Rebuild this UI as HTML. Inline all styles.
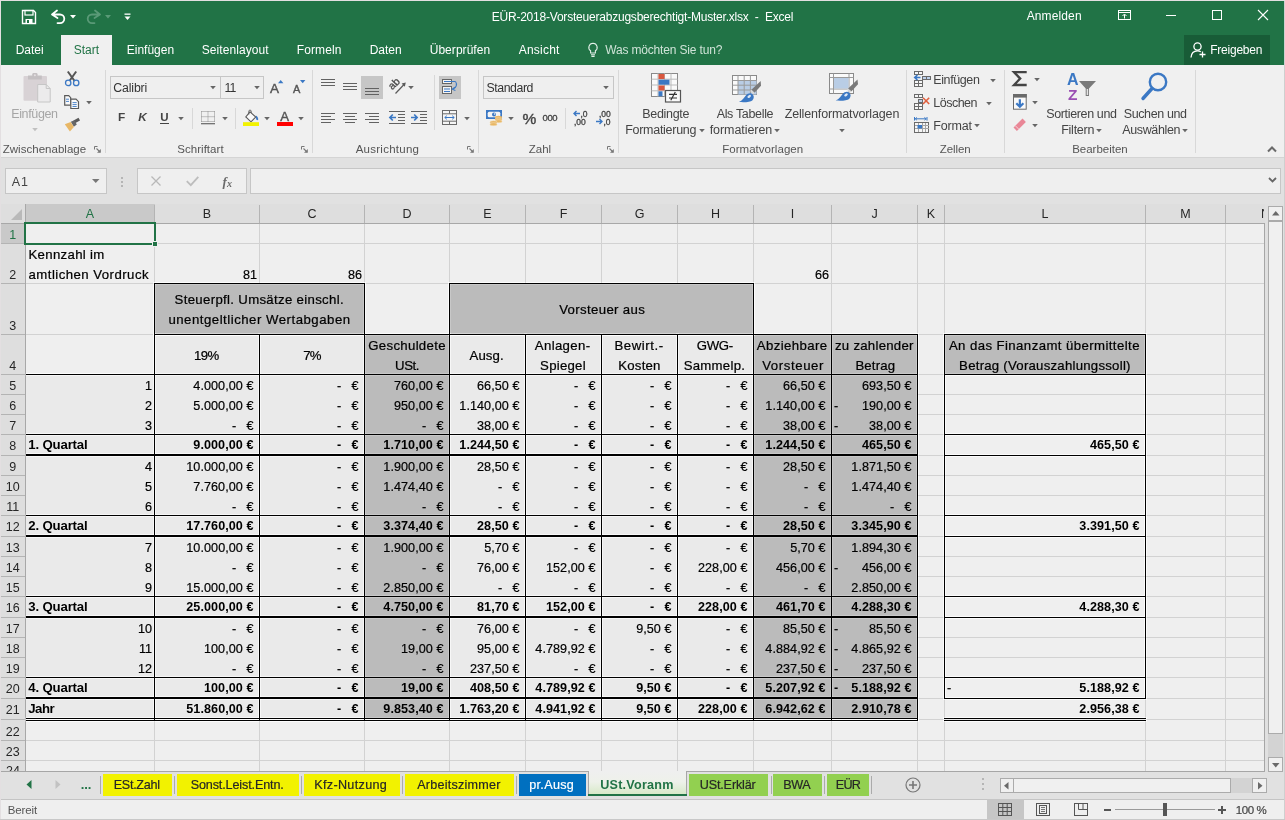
<!DOCTYPE html>
<html lang="de"><head><meta charset="utf-8"><title>Excel</title><style>
html,body{margin:0;padding:0;}
body{width:1285px;height:820px;overflow:hidden;position:relative;background:#e6e6e6;font-family:"Liberation Sans", sans-serif;}
#w{position:absolute;left:0;top:0;width:1285px;height:820px;overflow:hidden;}
#w div,#w svg,#w span{position:absolute;}
#w span{white-space:pre;}
#w svg{overflow:visible;}
#w .hl{display:none;}
@supports (mix-blend-mode:plus-lighter){#w .hl{display:block;background:rgb(13,13,13);mix-blend-mode:plus-lighter;}}
</style></head><body><div id="w">
<div style="left:0px;top:0px;width:1285px;height:820px;background:#e1e1e1;"></div>
<div style="left:0px;top:0px;width:1285px;height:65px;background:#217346;"></div>
<div style="left:0px;top:65px;width:1285px;height:92px;background:#f0f0f0;"></div>
<div style="left:0px;top:157px;width:1285px;height:1px;background:#d4d4d4;"></div>
<div style="left:0px;top:158px;width:1285px;height:46px;background:#e1e1e1;"></div>
<svg style="left:21px;top:9px;" width="16" height="16" viewBox="0 0 16 16"><path d="M1.5 1.5h11l2 2v11h-13z" fill="none" stroke="#fff" stroke-width="1.4"/><rect x="4" y="1.5" width="8" height="4.5" fill="none" stroke="#fff" stroke-width="1.2"/><rect x="4.5" y="10" width="7" height="4.5" fill="#fff"/><rect x="6" y="11" width="2" height="3" fill="#217346"/></svg>
<svg style="left:50px;top:9px;" width="18" height="16" viewBox="0 0 18 16"><path d="M2 5.5 L7 1.5 M2 5.5 L7.5 9 M2.3 5.5 H10 a4.3 4.3 0 0 1 0 8.6 H7.5" fill="none" stroke="#fff" stroke-width="1.8" stroke-linecap="round"/></svg>
<svg style="left:70px;top:15px;" width="7" height="4" viewBox="0 0 7 4"><path d="M0 0h6l-3 3.5z" fill="#fff"/></svg>
<svg style="left:83.5px;top:9px;" width="18" height="16" viewBox="0 0 18 16"><path d="M16 5.5 L11 1.5 M16 5.5 L10.5 9 M15.7 5.5 H8 a4.3 4.3 0 0 0 0 8.6 H10.5" fill="none" stroke="#5a9a77" stroke-width="1.8" stroke-linecap="round"/></svg>
<svg style="left:105px;top:15px;" width="7" height="4" viewBox="0 0 7 4"><path d="M0 0h6l-3 3.5z" fill="#5a9a77"/></svg>
<svg style="left:124px;top:13px;" width="8" height="8" viewBox="0 0 8 8"><rect x="0.5" y="0.5" width="6" height="1.3" fill="#fff"/><path d="M0.5 3.5h6l-3 3.5z" fill="#fff"/></svg>
<svg style="left:1118px;top:10px;" width="13" height="10" viewBox="0 0 13 10"><rect x="0.5" y="0.5" width="12" height="9" fill="none" stroke="#fff"/><path d="M0.5 2.5h12" stroke="#fff"/><path d="M6.5 8.5v-4M4.5 6l2-2 2 2" fill="none" stroke="#fff"/></svg>
<div style="left:1166px;top:15px;width:10px;height:1px;background:#fff;"></div>
<svg style="left:1212px;top:10px;" width="10" height="10" viewBox="0 0 10 10"><rect x="0.5" y="0.5" width="9" height="9" fill="none" stroke="#fff"/></svg>
<svg style="left:1258px;top:10px;" width="10" height="10" viewBox="0 0 10 10"><path d="M0 0l10 10M10 0l-10 10" stroke="#fff" stroke-width="1.1"/></svg>
<div style="left:61px;top:35px;width:51px;height:30px;background:#f0f0f0;"></div>
<svg style="left:587px;top:42px;" width="12" height="16" viewBox="0 0 12 16"><path d="M6 1.2a4.2 4.2 0 0 0-2.4 7.6v2.2h4.8v-2.2A4.2 4.2 0 0 0 6 1.2z" fill="none" stroke="#e4f0e9" stroke-width="1.1"/><path d="M4 12.7h4M4.4 14.4h3.2" stroke="#e4f0e9" stroke-width="1.1"/></svg>
<div style="left:1184px;top:35px;width:86px;height:30px;background:#185c37;"></div>
<svg style="left:1190px;top:41px;" width="18" height="18" viewBox="0 0 18 18"><circle cx="7.5" cy="5.5" r="3.6" fill="none" stroke="#fff" stroke-width="1.3"/><path d="M1 16.5c0.3-4 2.6-6.6 6.5-6.6 1.3 0 2.4 0.3 3.3 0.9" fill="none" stroke="#fff" stroke-width="1.3"/><path d="M12.5 10.5v6M9.5 13.5h6" stroke="#fff" stroke-width="1.3"/></svg>
<div style="left:5px;top:168px;width:102px;height:26px;background:#efefef;border:1px solid #c6c6c6;box-sizing:border-box;"></div>
<svg style="left:92px;top:179px;" width="8" height="5" viewBox="0 0 8 5"><path d="M0 0h7.5l-3.75 4z" fill="#777"/></svg>
<div style="left:121px;top:177px;width:2px;height:2px;background:#b5b5b5;"></div>
<div style="left:121px;top:181px;width:2px;height:2px;background:#b5b5b5;"></div>
<div style="left:121px;top:185px;width:2px;height:2px;background:#b5b5b5;"></div>
<div style="left:137px;top:168px;width:110px;height:26px;background:#efefef;border:1px solid #c6c6c6;box-sizing:border-box;"></div>
<svg style="left:151px;top:176px;" width="10" height="10" viewBox="0 0 10 10"><path d="M0.5 0.5l9 9M9.5 0.5l-9 9" stroke="#b8b8b8" stroke-width="1.3"/></svg>
<svg style="left:186px;top:176px;" width="13" height="10" viewBox="0 0 13 10"><path d="M0.8 5.2l4 4L12.3 0.8" fill="none" stroke="#bdbdbd" stroke-width="1.8"/></svg>
<div style="left:250px;top:168px;width:1031px;height:26px;background:#efefef;border:1px solid #c6c6c6;box-sizing:border-box;"></div>
<svg style="left:1268px;top:177px;" width="9" height="6" viewBox="0 0 9 6"><path d="M1 1l3.500 3.500 3.500-3.500" fill="none" stroke="#666" stroke-width="1.800"/></svg>
<div style="left:105px;top:70px;width:1px;height:83px;background:#d8d8d8;"></div>
<div style="left:312px;top:70px;width:1px;height:83px;background:#d8d8d8;"></div>
<div style="left:478px;top:70px;width:1px;height:83px;background:#d8d8d8;"></div>
<div style="left:618px;top:70px;width:1px;height:83px;background:#d8d8d8;"></div>
<div style="left:906px;top:70px;width:1px;height:83px;background:#d8d8d8;"></div>
<div style="left:1004px;top:70px;width:1px;height:83px;background:#d8d8d8;"></div>
<div style="left:1195px;top:70px;width:1px;height:83px;background:#d8d8d8;"></div>
<svg style="left:94px;top:146px;" width="7" height="7" viewBox="0 0 7 7"><path d="M0.500 3.500v-3h3" fill="none" stroke="#777"/><path d="M2.500 2.500l3.500 3.500" fill="none" stroke="#777" stroke-width="1.100"/><path d="M6.800 3v3.800h-3.800z" fill="#777"/></svg>
<svg style="left:301px;top:146px;" width="7" height="7" viewBox="0 0 7 7"><path d="M0.500 3.500v-3h3" fill="none" stroke="#777"/><path d="M2.500 2.500l3.500 3.500" fill="none" stroke="#777" stroke-width="1.100"/><path d="M6.800 3v3.800h-3.800z" fill="#777"/></svg>
<svg style="left:467px;top:146px;" width="7" height="7" viewBox="0 0 7 7"><path d="M0.500 3.500v-3h3" fill="none" stroke="#777"/><path d="M2.500 2.500l3.500 3.500" fill="none" stroke="#777" stroke-width="1.100"/><path d="M6.800 3v3.800h-3.800z" fill="#777"/></svg>
<svg style="left:607px;top:146px;" width="7" height="7" viewBox="0 0 7 7"><path d="M0.500 3.500v-3h3" fill="none" stroke="#777"/><path d="M2.500 2.500l3.500 3.500" fill="none" stroke="#777" stroke-width="1.100"/><path d="M6.800 3v3.800h-3.800z" fill="#777"/></svg>
<svg style="left:1267px;top:146px;" width="10" height="6" viewBox="0 0 10 6"><path d="M1 5.500l4-4 4 4" fill="none" stroke="#6a6a6a" stroke-width="2"/></svg>
<svg style="left:23px;top:72px;" width="29" height="32" viewBox="0 0 29 32"><rect x="0.500" y="4" width="23.500" height="24.700" rx="1" fill="#d8d2d5"/><rect x="5" y="3.500" width="13.800" height="4" fill="#c4c0c2"/><rect x="9.300" y="1" width="5.200" height="4" rx="1.200" fill="#c4c0c2"/><circle cx="11.900" cy="3.200" r="1" fill="#e4e0e2"/><path d="M14.700 12.500h8.500l4 4v13.500h-12.500z" fill="#ecebec" stroke="#c6c6c6" stroke-width="1"/><path d="M23.200 12.500v4h4" fill="none" stroke="#c6c6c6"/></svg>
<svg style="left:32px;top:128px;" width="6" height="4" viewBox="0 0 6 4"><path d="M0.2 0h5.6l-2.8 3.2z" fill="#c0c0c0"/></svg>
<svg style="left:64px;top:70px;" width="16" height="17" viewBox="0 0 16 17"><path d="M3.800 1.500l6.800 9.500M12.200 1.500L5.400 11" stroke="#555" stroke-width="2" fill="none"/><circle cx="4.200" cy="12.900" r="2.700" fill="none" stroke="#3b78c4" stroke-width="1.300"/><circle cx="12.200" cy="12.900" r="2.700" fill="none" stroke="#3b78c4" stroke-width="1.300"/></svg>
<svg style="left:64px;top:95px;" width="16" height="14" viewBox="0 0 16 14"><path d="M0.700 0.700h4l2 2v7.500h-6z" fill="#fafafa" stroke="#5a5a5a" stroke-width="1.200"/><path d="M2 4.200h3M2 6.400h3" stroke="#3b78c4" stroke-width="0.900"/><path d="M6.800 4.200h5.200l2.500 2.500v6.800h-7.700z" fill="#fafafa" stroke="#5a5a5a" stroke-width="1.200"/><path d="M8.500 7.600h4.200M8.500 9.600h4.200M8.500 11.500h4.200" stroke="#3b78c4" stroke-width="0.900"/></svg>
<svg style="left:86px;top:101px;" width="6" height="4" viewBox="0 0 6 4"><path d="M0.2 0h5.6l-2.8 3.2z" fill="#666666"/></svg>
<svg style="left:64px;top:117px;" width="17" height="15" viewBox="0 0 17 15"><path d="M9.500 3.500l5-2.700 1.500 2.600-5 2.900z" fill="#5a5a5a"/><path d="M6.800 4.800l3.500-1.500 2.500 4.200-3 2.300z" fill="#666"/><path d="M0.800 7.200l5.800-2.300 3.300 5.200-4 4.500z" fill="#e8b766"/></svg>
<div style="left:110px;top:76px;width:111px;height:23px;background:#efefef;border:1px solid #c6c6c6;box-sizing:border-box;"></div>
<div style="left:220px;top:76px;width:44px;height:23px;background:#efefef;border:1px solid #c6c6c6;box-sizing:border-box;"></div>
<svg style="left:210px;top:86px;" width="6" height="4" viewBox="0 0 6 4"><path d="M0.2 0h5.6l-2.8 3.2z" fill="#666666"/></svg>
<svg style="left:254px;top:86px;" width="6" height="4" viewBox="0 0 6 4"><path d="M0.2 0h5.6l-2.8 3.2z" fill="#666666"/></svg>
<svg style="left:278px;top:80px;" width="6" height="4" viewBox="0 0 6 4"><path d="M0 3.200h5.400l-2.700-3.200z" fill="#3b78c4"/></svg>
<svg style="left:300px;top:80px;" width="6" height="4" viewBox="0 0 6 4"><path d="M0 0h5.400l-2.700 3.200z" fill="#3b78c4"/></svg>
<div style="left:160px;top:123px;width:9px;height:1px;background:#444;"></div>
<svg style="left:178px;top:117px;" width="6" height="4" viewBox="0 0 6 4"><path d="M0.2 0h5.6l-2.8 3.2z" fill="#666666"/></svg>
<div style="left:192px;top:108px;width:1px;height:21px;background:#d8d8d8;"></div>
<svg style="left:201px;top:111px;" width="14" height="14" viewBox="0 0 14 14"><path d="M0.500 0.500h13M0.500 5.700h13M0.500 10.500h13M0.500 0.500v10.500M7 0.500v10.500M13.500 0.500v10.500" stroke="#8a8a8a" stroke-dasharray="1 1" fill="none"/><path d="M0 12.700h14" stroke="#666" stroke-width="1.200"/></svg>
<svg style="left:222px;top:117px;" width="6" height="4" viewBox="0 0 6 4"><path d="M0.2 0h5.6l-2.8 3.2z" fill="#666666"/></svg>
<div style="left:235px;top:108px;width:1px;height:21px;background:#d8d8d8;"></div>
<svg style="left:243px;top:109px;" width="17" height="17" viewBox="0 0 17 17"><path d="M7 2.800l5.800 5.200-4.800 4.800-5.200-4.800z" fill="#fafafa" stroke="#5a5a5a" stroke-width="1.100"/><path d="M5.800 5.500v-3.300c0-1.500 2.400-1.500 2.400 0v1.800" fill="none" stroke="#5a5a5a" stroke-width="0.900"/><path d="M12.800 6.500c1.800 1 2.800 2.600 2.300 4.500-1 0.500-2-0.200-2-1.500z" fill="#3b78c4"/><rect x="0" y="13.200" width="16" height="3.800" fill="#f2f200"/></svg>
<svg style="left:264px;top:117px;" width="6" height="4" viewBox="0 0 6 4"><path d="M0.2 0h5.6l-2.8 3.2z" fill="#666666"/></svg>
<div style="left:277px;top:122.2px;width:16px;height:3.8px;background:#ff0000;"></div>
<svg style="left:298px;top:117px;" width="6" height="4" viewBox="0 0 6 4"><path d="M0.2 0h5.6l-2.8 3.2z" fill="#666666"/></svg>
<div style="left:321px;top:79px;width:14px;height:1px;background:#626262;"></div>
<div style="left:321px;top:82px;width:14px;height:1px;background:#626262;"></div>
<div style="left:321px;top:85px;width:14px;height:1px;background:#626262;"></div>
<div style="left:343px;top:83px;width:14px;height:1px;background:#626262;"></div>
<div style="left:343px;top:86px;width:14px;height:1px;background:#626262;"></div>
<div style="left:343px;top:89px;width:14px;height:1px;background:#626262;"></div>
<div style="left:361px;top:76px;width:22px;height:23px;background:#c6c6c6;"></div>
<div style="left:365px;top:88px;width:14px;height:1px;background:#626262;"></div>
<div style="left:365px;top:91px;width:14px;height:1px;background:#626262;"></div>
<div style="left:365px;top:94px;width:14px;height:1px;background:#626262;"></div>
<svg style="left:388px;top:76px;" width="20" height="20" viewBox="0 0 20 20"><path d="M7.500 17.500L16.500 8" stroke="#5a5a5a" stroke-width="1.200"/><path d="M17.800 6.600l-4.200 1 3.200 3.200z" fill="#5a5a5a"/><text x="0" y="0" transform="translate(4.300 14.300) rotate(-45)" font-family="Liberation Sans, sans-serif" font-size="10.500" fill="#4a4a4a" stroke="#4a4a4a" stroke-width="0.300">ab</text></svg>
<svg style="left:408px;top:86px;" width="6" height="4" viewBox="0 0 6 4"><path d="M0.2 0h5.6l-2.8 3.2z" fill="#666666"/></svg>
<div style="left:434px;top:75px;width:1px;height:55px;background:#d8d8d8;"></div>
<div style="left:439px;top:76px;width:22px;height:23px;background:#c6c6c6;"></div>
<svg style="left:442px;top:79px;" width="16" height="16" viewBox="0 0 16 16"><rect x="0.500" y="0.500" width="9" height="4" fill="#f4f4f4" stroke="#666"/><rect x="0.500" y="7.500" width="9" height="7" fill="#f4f4f4" stroke="#666"/><path d="M2 2.500h11.500M2 10h6M2 12.500h6" stroke="#3b78c4" stroke-width="1"/><path d="M13.500 2.500c1.800 2.500 1 6.500-2.500 7.500" fill="none" stroke="#3b78c4" stroke-width="1.100"/><path d="M13 8.200l-2.800 2 3.200 1.300" fill="none" stroke="#3b78c4" stroke-width="1.100"/></svg>
<div style="left:321px;top:113px;width:14px;height:1px;background:#626262;"></div>
<div style="left:321px;top:116px;width:10px;height:1px;background:#626262;"></div>
<div style="left:321px;top:119px;width:14px;height:1px;background:#626262;"></div>
<div style="left:321px;top:122px;width:10px;height:1px;background:#626262;"></div>
<div style="left:343px;top:113px;width:14px;height:1px;background:#626262;"></div>
<div style="left:345px;top:116px;width:10px;height:1px;background:#626262;"></div>
<div style="left:343px;top:119px;width:14px;height:1px;background:#626262;"></div>
<div style="left:345px;top:122px;width:10px;height:1px;background:#626262;"></div>
<div style="left:365px;top:113px;width:14px;height:1px;background:#626262;"></div>
<div style="left:369px;top:116px;width:10px;height:1px;background:#626262;"></div>
<div style="left:365px;top:119px;width:14px;height:1px;background:#626262;"></div>
<div style="left:369px;top:122px;width:10px;height:1px;background:#626262;"></div>
<div style="left:389px;top:111px;width:16px;height:1px;background:#626262;"></div>
<div style="left:398px;top:114px;width:7px;height:1px;background:#626262;"></div>
<div style="left:398px;top:117px;width:7px;height:1px;background:#626262;"></div>
<div style="left:398px;top:120px;width:7px;height:1px;background:#626262;"></div>
<div style="left:389px;top:123px;width:16px;height:1px;background:#626262;"></div>
<svg style="left:389px;top:113px;" width="8" height="9" viewBox="0 0 8 9"><path d="M7 4.500H1.200M3.800 1.500L0.900 4.500l2.900 3" fill="none" stroke="#3b78c4" stroke-width="1.700"/></svg>
<div style="left:411px;top:111px;width:16px;height:1px;background:#626262;"></div>
<div style="left:420px;top:114px;width:7px;height:1px;background:#626262;"></div>
<div style="left:420px;top:117px;width:7px;height:1px;background:#626262;"></div>
<div style="left:420px;top:120px;width:7px;height:1px;background:#626262;"></div>
<div style="left:411px;top:123px;width:16px;height:1px;background:#626262;"></div>
<svg style="left:411px;top:113px;" width="8" height="9" viewBox="0 0 8 9"><path d="M0 4.500h5.800M3.200 1.500L6.100 4.500l-2.900 3" fill="none" stroke="#3b78c4" stroke-width="1.700"/></svg>
<svg style="left:442px;top:110px;" width="16" height="16" viewBox="0 0 16 16"><rect x="0.500" y="0.500" width="14" height="14" fill="#f6f6f6" stroke="#6a6a6a"/><path d="M0.500 3.800h14M0.500 11.200h14M7.500 0.500v3.300M7.500 11.200v3.300" stroke="#6a6a6a"/><path d="M2.800 7.500h9.400M4.800 5.700L2.800 7.500l2 1.800M10.200 5.700l2 1.800-2 1.800" fill="none" stroke="#3b78c4" stroke-width="1"/></svg>
<svg style="left:464px;top:117px;" width="6" height="4" viewBox="0 0 6 4"><path d="M0.2 0h5.6l-2.8 3.2z" fill="#666666"/></svg>
<div style="left:483px;top:76px;width:131px;height:23px;background:#efefef;border:1px solid #c6c6c6;box-sizing:border-box;"></div>
<svg style="left:603px;top:86px;" width="6" height="4" viewBox="0 0 6 4"><path d="M0.2 0h5.6l-2.8 3.2z" fill="#666666"/></svg>
<svg style="left:486px;top:109px;" width="17" height="17" viewBox="0 0 17 17"><rect x="0" y="1" width="16" height="9" fill="#3b78c4"/><rect x="1.700" y="2.700" width="12.600" height="5.600" rx="1.500" fill="#f4f4f4"/><circle cx="8" cy="5.500" r="2" fill="#3b78c4"/><circle cx="8.600" cy="5" r="0.800" fill="#f4f4f4"/><ellipse cx="12.500" cy="8.300" rx="3.600" ry="1.500" fill="#e8b766"/><ellipse cx="12.500" cy="10.300" rx="3.600" ry="1.500" fill="#e8b766" stroke="#f4e3c0" stroke-width="0.500"/><ellipse cx="12.500" cy="12.200" rx="3.600" ry="1.500" fill="#e8b766" stroke="#f4e3c0" stroke-width="0.500"/><ellipse cx="7.500" cy="13.200" rx="3.600" ry="1.500" fill="#e8b766" stroke="#f4e3c0" stroke-width="0.500"/><ellipse cx="7.500" cy="15.200" rx="3.600" ry="1.500" fill="#e8b766" stroke="#f4e3c0" stroke-width="0.500"/></svg>
<svg style="left:508px;top:117px;" width="6" height="4" viewBox="0 0 6 4"><path d="M0.2 0h5.6l-2.8 3.2z" fill="#666666"/></svg>
<div style="left:565px;top:108px;width:1px;height:21px;background:#d8d8d8;"></div>
<svg style="left:573px;top:110px;" width="16" height="16" viewBox="0 0 16 16"><path d="M1 3.5h6M3.5 1L1 3.5 3.5 6" fill="none" stroke="#3b78c4" stroke-width="1.4"/></svg>
<svg style="left:595px;top:110px;" width="16" height="16" viewBox="0 0 16 16"><path d="M1 11.5h6M4.5 9L7 11.5 4.5 14" fill="none" stroke="#3b78c4" stroke-width="1.4"/></svg>
<svg style="left:651px;top:73px;" width="31" height="30" viewBox="0 0 31 30"><rect x="0.5" y="0.5" width="26" height="23" fill="#fafafa" stroke="#8a8a8a"/><path d="M0.5 6.2h26M0.5 12h26M0.5 17.8h26M7 0.5v23M13.5 0.5v23M20 0.5v23" stroke="#bcbcbc"/><rect x="7.5" y="1" width="6" height="5" fill="#d9573f"/><rect x="7.5" y="6.7" width="11" height="5" fill="#3b78c4"/><rect x="7.5" y="12.5" width="6" height="5" fill="#d9573f"/><rect x="7.5" y="18.3" width="4" height="5" fill="#3b78c4"/><rect x="14.5" y="17.5" width="15" height="11.5" fill="#fafafa" stroke="#555" stroke-width="1.2"/><path d="M18 21.3h8M18 25h8M24.3 19l-4.5 8.3" stroke="#333" stroke-width="1.2"/></svg>
<svg style="left:699px;top:129px;" width="6" height="4" viewBox="0 0 6 4"><path d="M0.2 0h5.6l-2.8 3.2z" fill="#666666"/></svg>
<svg style="left:732px;top:75px;" width="30" height="28" viewBox="0 0 30 28"><rect x="0.5" y="0.5" width="24" height="19" fill="#fafafa" stroke="#8a8a8a"/><rect x="6" y="5.5" width="18.5" height="14" fill="#b9cde5"/><path d="M0.5 5.5h24M0.5 10.2h24M0.5 15h24M6 0.5v19M12.2 0.5v19M18.4 0.5v19" stroke="#9a9a9a"/><path d="M28.700 6.100l0.300 4.700-6.500 7-3.100-3.100z" fill="#7a7a7a"/><path d="M19.400 14.700l3.100 3.100-1.300 1.400-3.100-3.100z" fill="#d8d8d8"/><path d="M6.900 27.100C10.500 25.500 12 22.500 13.800 20.500C15.500 18.500 18.500 17.600 20.300 19C22.300 20.600 22.300 23.500 20.300 25.500C18.500 27.200 13 27.400 6.900 27.100Z" fill="#3b78c4"/><ellipse cx="17.200" cy="21.400" rx="2" ry="1.200" transform="rotate(-35 17.200 21.400)" fill="#dfe8f4"/></svg>
<svg style="left:774px;top:129px;" width="6" height="4" viewBox="0 0 6 4"><path d="M0.2 0h5.6l-2.8 3.2z" fill="#666666"/></svg>
<svg style="left:829px;top:73px;" width="30" height="30" viewBox="0 0 30 30"><rect x="0.5" y="0.5" width="24" height="20" fill="#fafafa" stroke="#8a8a8a"/><path d="M0.5 4.5h24M0.5 16h24M4.500 0.500v20M20 0.500v20" stroke="#9a9a9a"/><rect x="5" y="5" width="14.500" height="10.500" fill="#b9cde5"/><path d="M28.500 6.600l0.500 4.600-6.700 7.200-3.200-3z" fill="#7a7a7a"/><path d="M19.100 15.400l3.200 3-1.300 1.400-3.200-3z" fill="#d8d8d8"/><path d="M6.700 27.600C10.300 26 11.800 23 13.600 21C15.300 19 18.300 18.100 20.100 19.500C22.100 21.100 22.100 24 20.100 26C18.300 27.700 12.800 27.900 6.700 27.600Z" fill="#3b78c4"/><ellipse cx="17" cy="21.900" rx="2" ry="1.200" transform="rotate(-35 17 21.900)" fill="#dfe8f4"/></svg>
<svg style="left:839px;top:129px;" width="6" height="4" viewBox="0 0 6 4"><path d="M0.2 0h5.6l-2.8 3.2z" fill="#666666"/></svg>
<svg style="left:914px;top:71px;" width="17" height="16" viewBox="0 0 17 16"><rect x="0.5" y="0.5" width="4" height="3" fill="#f6f6f6" stroke="#6a6a6a" shape-rendering="crispEdges"/><rect x="4.5" y="0.5" width="4" height="3" fill="#f6f6f6" stroke="#6a6a6a" shape-rendering="crispEdges"/><rect x="8" y="5" width="4" height="3" fill="#bcd0ea" stroke="#6a6a6a" shape-rendering="crispEdges"/><rect x="12" y="5" width="4" height="3" fill="#bcd0ea" stroke="#6a6a6a" shape-rendering="crispEdges"/><rect x="0.5" y="9.5" width="4" height="3" fill="#f6f6f6" stroke="#6a6a6a" shape-rendering="crispEdges"/><rect x="4.5" y="9.5" width="4" height="3" fill="#f6f6f6" stroke="#6a6a6a" shape-rendering="crispEdges"/><rect x="0.5" y="12.5" width="4" height="3" fill="#f6f6f6" stroke="#6a6a6a" shape-rendering="crispEdges"/><rect x="4.5" y="12.5" width="4" height="3" fill="#f6f6f6" stroke="#6a6a6a" shape-rendering="crispEdges"/><path d="M6.500 6.500H1M3.400 4L0.800 6.500l2.600 2.500" fill="none" stroke="#3b78c4" stroke-width="1.700"/></svg>
<svg style="left:990px;top:79px;" width="6" height="4" viewBox="0 0 6 4"><path d="M0.2 0h5.6l-2.8 3.2z" fill="#666666"/></svg>
<svg style="left:914px;top:94px;" width="17" height="16" viewBox="0 0 17 16"><rect x="0.5" y="0.5" width="4" height="3" fill="#f6f6f6" stroke="#6a6a6a" shape-rendering="crispEdges"/><rect x="4.5" y="0.5" width="4" height="3" fill="#f6f6f6" stroke="#6a6a6a" shape-rendering="crispEdges"/><rect x="4" y="5" width="4" height="3" fill="#bcd0ea" stroke="#6a6a6a" shape-rendering="crispEdges"/><rect x="0.5" y="9.5" width="4" height="3" fill="#f6f6f6" stroke="#6a6a6a" shape-rendering="crispEdges"/><rect x="4.5" y="9.5" width="4" height="3" fill="#f6f6f6" stroke="#6a6a6a" shape-rendering="crispEdges"/><rect x="0.5" y="12.5" width="4" height="3" fill="#f6f6f6" stroke="#6a6a6a" shape-rendering="crispEdges"/><rect x="4.5" y="12.5" width="4" height="3" fill="#f6f6f6" stroke="#6a6a6a" shape-rendering="crispEdges"/><path d="M9 3.800l6.200 6.200M15.200 3.800l-6.200 6.200" stroke="#e0603f" stroke-width="1.600"/></svg>
<svg style="left:986px;top:102px;" width="6" height="4" viewBox="0 0 6 4"><path d="M0.2 0h5.6l-2.8 3.2z" fill="#666666"/></svg>
<svg style="left:914px;top:117px;" width="16" height="16" viewBox="0 0 16 16"><path d="M1.200 1.800h11M0.500 0v3.600M13 0v3.600" stroke="#3b78c4" stroke-width="1" fill="none"/><path d="M3 0.400L1.200 1.800 3 3.200M10.400 0.400l1.800 1.400-1.800 1.400" stroke="#3b78c4" stroke-width="0.900" fill="none"/><rect x="0.5" y="5.5" width="14" height="9.5" fill="#f6f6f6" stroke="#6a6a6a" shape-rendering="crispEdges"/><path d="M0.500 8.500h14M0.500 11.500h14M4 5.500v9.500M8 5.500v9.500M11.500 5.500v9.500" stroke="#a4a4a4" shape-rendering="crispEdges"/><rect x="3.500" y="8" width="4.500" height="3.500" fill="#3b78c4"/></svg>
<svg style="left:974px;top:124px;" width="6" height="4" viewBox="0 0 6 4"><path d="M0.2 0h5.6l-2.8 3.2z" fill="#666666"/></svg>
<svg style="left:1012px;top:71px;" width="16" height="16" viewBox="0 0 16 16"><path d="M14.700 1.200H2l6.200 6.400-6.200 6.400H14.700" fill="none" stroke="#444" stroke-width="2.300" stroke-linejoin="miter"/></svg>
<svg style="left:1034px;top:78px;" width="6" height="4" viewBox="0 0 6 4"><path d="M0.2 0h5.6l-2.8 3.2z" fill="#666666"/></svg>
<svg style="left:1013px;top:94px;" width="14" height="16" viewBox="0 0 14 16"><rect x="0.500" y="0.500" width="12.700" height="14.700" fill="#fafafa" stroke="#6a6a6a"/><rect x="0" y="0" width="13.700" height="3.600" fill="#6a6a6a"/><path d="M6.850 5.200v7.500M3.300 9.200l3.550 3.500 3.550-3.500" fill="none" stroke="#3b78c4" stroke-width="2.200"/></svg>
<svg style="left:1032px;top:101px;" width="6" height="4" viewBox="0 0 6 4"><path d="M0.2 0h5.6l-2.8 3.2z" fill="#666666"/></svg>
<svg style="left:1013px;top:118px;" width="14" height="14" viewBox="0 0 14 14"><path d="M9.500 0.500l3.400 3.400-9 9-3.400-3.400z" fill="#e98797"/><path d="M2.300 7.700l3.400 3.400" stroke="#f6d3d8" stroke-width="1"/></svg>
<svg style="left:1032px;top:124px;" width="6" height="4" viewBox="0 0 6 4"><path d="M0.2 0h5.6l-2.8 3.2z" fill="#666666"/></svg>
<svg style="left:1079px;top:81px;" width="18" height="16" viewBox="0 0 18 16"><path d="M0 0h17l-7 7.500v7.500h-3.300v-7.500z" fill="#7a7a7a"/><rect x="7.700" y="8" width="1.400" height="6" fill="#e4e4e4"/></svg>
<svg style="left:1096px;top:129px;" width="6" height="4" viewBox="0 0 6 4"><path d="M0.2 0h5.6l-2.8 3.2z" fill="#666666"/></svg>
<svg style="left:1141px;top:72px;" width="28" height="29" viewBox="0 0 28 29"><circle cx="17" cy="10" r="8.200" fill="none" stroke="#3b78c4" stroke-width="2.400"/><path d="M11 16.500l-9 10" stroke="#3b78c4" stroke-width="3.400" stroke-linecap="round"/></svg>
<svg style="left:1182px;top:129px;" width="6" height="4" viewBox="0 0 6 4"><path d="M0.2 0h5.6l-2.8 3.2z" fill="#666666"/></svg>
<div style="left:26px;top:224px;width:1239px;height:547px;background:#efefef;"></div>
<div style="left:1px;top:204px;width:1264px;height:19px;background:#dedede;"></div>
<div style="left:1px;top:224px;width:24px;height:547px;background:#dedede;"></div>
<div style="left:25px;top:204px;width:130px;height:19px;background:#c9c9c9;"></div>
<div style="left:1px;top:224px;width:24px;height:19px;background:#c9c9c9;"></div>
<div style="left:26px;top:375px;width:891px;height:344px;background:#eaeaea;"></div>
<div style="left:155px;top:335px;width:762px;height:40px;background:#eaeaea;"></div>
<div style="left:155px;top:284px;width:209px;height:50px;background:#bbbbbb;"></div>
<div style="left:450px;top:284px;width:303px;height:50px;background:#bbbbbb;"></div>
<div style="left:365px;top:335px;width:84px;height:384px;background:#bbbbbb;"></div>
<div style="left:754px;top:335px;width:163px;height:384px;background:#bbbbbb;"></div>
<div style="left:945px;top:335px;width:200px;height:39px;background:#bbbbbb;"></div>
<div style="left:154px;top:224px;width:1px;height:60px;background:#d2d2d2;"></div>
<div style="left:154px;top:720px;width:1px;height:51px;background:#d2d2d2;"></div>
<div style="left:259px;top:224px;width:1px;height:60px;background:#d2d2d2;"></div>
<div style="left:259px;top:720px;width:1px;height:51px;background:#d2d2d2;"></div>
<div style="left:364px;top:224px;width:1px;height:60px;background:#d2d2d2;"></div>
<div style="left:364px;top:720px;width:1px;height:51px;background:#d2d2d2;"></div>
<div style="left:449px;top:224px;width:1px;height:60px;background:#d2d2d2;"></div>
<div style="left:449px;top:720px;width:1px;height:51px;background:#d2d2d2;"></div>
<div style="left:525px;top:224px;width:1px;height:60px;background:#d2d2d2;"></div>
<div style="left:525px;top:720px;width:1px;height:51px;background:#d2d2d2;"></div>
<div style="left:601px;top:224px;width:1px;height:60px;background:#d2d2d2;"></div>
<div style="left:601px;top:720px;width:1px;height:51px;background:#d2d2d2;"></div>
<div style="left:677px;top:224px;width:1px;height:60px;background:#d2d2d2;"></div>
<div style="left:677px;top:720px;width:1px;height:51px;background:#d2d2d2;"></div>
<div style="left:753px;top:224px;width:1px;height:60px;background:#d2d2d2;"></div>
<div style="left:753px;top:720px;width:1px;height:51px;background:#d2d2d2;"></div>
<div style="left:831px;top:224px;width:1px;height:60px;background:#d2d2d2;"></div>
<div style="left:831px;top:720px;width:1px;height:51px;background:#d2d2d2;"></div>
<div style="left:917px;top:224px;width:1px;height:60px;background:#d2d2d2;"></div>
<div style="left:917px;top:720px;width:1px;height:51px;background:#d2d2d2;"></div>
<div style="left:944px;top:224px;width:1px;height:547px;background:#d2d2d2;"></div>
<div style="left:1145px;top:224px;width:1px;height:547px;background:#d2d2d2;"></div>
<div style="left:1225px;top:224px;width:1px;height:547px;background:#d2d2d2;"></div>
<div style="left:154px;top:284px;width:1px;height:91px;background:#d2d2d2;"></div>
<div style="left:364px;top:284px;width:1px;height:51px;background:#d2d2d2;"></div>
<div style="left:449px;top:284px;width:1px;height:51px;background:#d2d2d2;"></div>
<div style="left:753px;top:284px;width:1px;height:51px;background:#d2d2d2;"></div>
<div style="left:831px;top:284px;width:1px;height:51px;background:#d2d2d2;"></div>
<div style="left:917px;top:284px;width:1px;height:436px;background:#d2d2d2;"></div>
<div style="left:26px;top:243px;width:1239px;height:1px;background:#d2d2d2;"></div>
<div style="left:26px;top:283px;width:1239px;height:1px;background:#d2d2d2;"></div>
<div style="left:26px;top:334px;width:129px;height:1px;background:#d2d2d2;"></div>
<div style="left:365px;top:334px;width:84px;height:1px;background:#d2d2d2;"></div>
<div style="left:754px;top:334px;width:511px;height:1px;background:#d2d2d2;"></div>
<div style="left:26px;top:374px;width:129px;height:1px;background:#d2d2d2;"></div>
<div style="left:918px;top:374px;width:347px;height:1px;background:#d2d2d2;"></div>
<div style="left:918px;top:394px;width:347px;height:1px;background:#d2d2d2;"></div>
<div style="left:918px;top:414px;width:347px;height:1px;background:#d2d2d2;"></div>
<div style="left:918px;top:434px;width:347px;height:1px;background:#d2d2d2;"></div>
<div style="left:918px;top:455px;width:347px;height:1px;background:#d2d2d2;"></div>
<div style="left:918px;top:475px;width:347px;height:1px;background:#d2d2d2;"></div>
<div style="left:918px;top:495px;width:347px;height:1px;background:#d2d2d2;"></div>
<div style="left:918px;top:515px;width:347px;height:1px;background:#d2d2d2;"></div>
<div style="left:918px;top:536px;width:347px;height:1px;background:#d2d2d2;"></div>
<div style="left:918px;top:556px;width:347px;height:1px;background:#d2d2d2;"></div>
<div style="left:918px;top:576px;width:347px;height:1px;background:#d2d2d2;"></div>
<div style="left:918px;top:596px;width:347px;height:1px;background:#d2d2d2;"></div>
<div style="left:918px;top:617px;width:347px;height:1px;background:#d2d2d2;"></div>
<div style="left:918px;top:637px;width:347px;height:1px;background:#d2d2d2;"></div>
<div style="left:918px;top:657px;width:347px;height:1px;background:#d2d2d2;"></div>
<div style="left:918px;top:677px;width:347px;height:1px;background:#d2d2d2;"></div>
<div style="left:918px;top:698px;width:347px;height:1px;background:#d2d2d2;"></div>
<div style="left:918px;top:719px;width:347px;height:1px;background:#d2d2d2;"></div>
<div style="left:26px;top:740px;width:1239px;height:1px;background:#d2d2d2;"></div>
<div style="left:26px;top:760px;width:1239px;height:1px;background:#d2d2d2;"></div>
<div style="left:1px;top:223px;width:1264px;height:1px;background:#a8a8a8;"></div>
<div style="left:25px;top:204px;width:1px;height:567px;background:#a8a8a8;"></div>
<div style="left:154px;top:205px;width:1px;height:18px;background:#b4b4b4;"></div>
<div style="left:259px;top:205px;width:1px;height:18px;background:#b4b4b4;"></div>
<div style="left:364px;top:205px;width:1px;height:18px;background:#b4b4b4;"></div>
<div style="left:449px;top:205px;width:1px;height:18px;background:#b4b4b4;"></div>
<div style="left:525px;top:205px;width:1px;height:18px;background:#b4b4b4;"></div>
<div style="left:601px;top:205px;width:1px;height:18px;background:#b4b4b4;"></div>
<div style="left:677px;top:205px;width:1px;height:18px;background:#b4b4b4;"></div>
<div style="left:753px;top:205px;width:1px;height:18px;background:#b4b4b4;"></div>
<div style="left:831px;top:205px;width:1px;height:18px;background:#b4b4b4;"></div>
<div style="left:917px;top:205px;width:1px;height:18px;background:#b4b4b4;"></div>
<div style="left:944px;top:205px;width:1px;height:18px;background:#b4b4b4;"></div>
<div style="left:1145px;top:205px;width:1px;height:18px;background:#b4b4b4;"></div>
<div style="left:1225px;top:205px;width:1px;height:18px;background:#b4b4b4;"></div>
<div style="left:1px;top:243px;width:24px;height:1px;background:#b4b4b4;"></div>
<div style="left:1px;top:283px;width:24px;height:1px;background:#b4b4b4;"></div>
<div style="left:1px;top:334px;width:24px;height:1px;background:#b4b4b4;"></div>
<div style="left:1px;top:374px;width:24px;height:1px;background:#b4b4b4;"></div>
<div style="left:1px;top:394px;width:24px;height:1px;background:#b4b4b4;"></div>
<div style="left:1px;top:414px;width:24px;height:1px;background:#b4b4b4;"></div>
<div style="left:1px;top:434px;width:24px;height:1px;background:#b4b4b4;"></div>
<div style="left:1px;top:455px;width:24px;height:1px;background:#b4b4b4;"></div>
<div style="left:1px;top:475px;width:24px;height:1px;background:#b4b4b4;"></div>
<div style="left:1px;top:495px;width:24px;height:1px;background:#b4b4b4;"></div>
<div style="left:1px;top:515px;width:24px;height:1px;background:#b4b4b4;"></div>
<div style="left:1px;top:536px;width:24px;height:1px;background:#b4b4b4;"></div>
<div style="left:1px;top:556px;width:24px;height:1px;background:#b4b4b4;"></div>
<div style="left:1px;top:576px;width:24px;height:1px;background:#b4b4b4;"></div>
<div style="left:1px;top:596px;width:24px;height:1px;background:#b4b4b4;"></div>
<div style="left:1px;top:617px;width:24px;height:1px;background:#b4b4b4;"></div>
<div style="left:1px;top:637px;width:24px;height:1px;background:#b4b4b4;"></div>
<div style="left:1px;top:657px;width:24px;height:1px;background:#b4b4b4;"></div>
<div style="left:1px;top:677px;width:24px;height:1px;background:#b4b4b4;"></div>
<div style="left:1px;top:698px;width:24px;height:1px;background:#b4b4b4;"></div>
<div style="left:1px;top:719px;width:24px;height:1px;background:#b4b4b4;"></div>
<div style="left:1px;top:740px;width:24px;height:1px;background:#b4b4b4;"></div>
<div style="left:1px;top:760px;width:24px;height:1px;background:#b4b4b4;"></div>
<svg style="left:10px;top:208px;" width="13" height="13" viewBox="0 0 13 13"><path d="M12 1v11H1z" fill="#b9b9b9"/></svg>
<div style="left:1226px;top:204px;width:38px;height:19px;overflow:hidden;"><span style="position:absolute;left:35px;top:4px;font-size:12.5px;line-height:12.5px;color:#262626;">N</span></div>
<div style="left:1px;top:761px;width:24px;height:10px;overflow:hidden;"><span style="position:absolute;left:5px;top:4px;font-size:12.5px;line-height:12.5px;color:#262626;">24</span></div>
<div class="hl" style="left:153px;top:282px;width:213px;height:3px;"></div>
<div class="hl" style="left:153px;top:333px;width:213px;height:3px;"></div>
<div class="hl" style="left:153px;top:282px;width:3px;height:54px;"></div>
<div class="hl" style="left:363px;top:282px;width:3px;height:54px;"></div>
<div class="hl" style="left:448px;top:282px;width:307px;height:3px;"></div>
<div class="hl" style="left:448px;top:333px;width:307px;height:3px;"></div>
<div class="hl" style="left:448px;top:282px;width:3px;height:54px;"></div>
<div class="hl" style="left:752px;top:282px;width:3px;height:54px;"></div>
<div class="hl" style="left:153px;top:333px;width:3px;height:388px;"></div>
<div class="hl" style="left:258px;top:333px;width:3px;height:388px;"></div>
<div class="hl" style="left:363px;top:333px;width:3px;height:388px;"></div>
<div class="hl" style="left:448px;top:333px;width:3px;height:388px;"></div>
<div class="hl" style="left:524px;top:333px;width:3px;height:388px;"></div>
<div class="hl" style="left:600px;top:333px;width:3px;height:388px;"></div>
<div class="hl" style="left:676px;top:333px;width:3px;height:388px;"></div>
<div class="hl" style="left:752px;top:333px;width:3px;height:388px;"></div>
<div class="hl" style="left:830px;top:333px;width:3px;height:388px;"></div>
<div class="hl" style="left:916px;top:333px;width:3px;height:388px;"></div>
<div class="hl" style="left:153px;top:333px;width:766px;height:3px;"></div>
<div class="hl" style="left:25px;top:373px;width:894px;height:3px;"></div>
<div class="hl" style="left:25px;top:433px;width:894px;height:3px;"></div>
<div class="hl" style="left:25px;top:514px;width:894px;height:3px;"></div>
<div class="hl" style="left:25px;top:595px;width:894px;height:3px;"></div>
<div class="hl" style="left:25px;top:676px;width:894px;height:3px;"></div>
<div class="hl" style="left:25px;top:453px;width:894px;height:4px;"></div>
<div class="hl" style="left:25px;top:534px;width:894px;height:4px;"></div>
<div class="hl" style="left:25px;top:615px;width:894px;height:4px;"></div>
<div class="hl" style="left:25px;top:696px;width:894px;height:4px;"></div>
<div class="hl" style="left:25px;top:717px;width:894px;height:3px;"></div>
<div class="hl" style="left:25px;top:719px;width:894px;height:3px;"></div>
<div class="hl" style="left:943px;top:333px;width:204px;height:3px;"></div>
<div class="hl" style="left:943px;top:373px;width:204px;height:3px;"></div>
<div class="hl" style="left:943px;top:333px;width:3px;height:367px;"></div>
<div class="hl" style="left:1144px;top:333px;width:3px;height:367px;"></div>
<div class="hl" style="left:943px;top:433px;width:204px;height:3px;"></div>
<div class="hl" style="left:943px;top:454px;width:204px;height:3px;"></div>
<div class="hl" style="left:943px;top:514px;width:204px;height:3px;"></div>
<div class="hl" style="left:943px;top:535px;width:204px;height:3px;"></div>
<div class="hl" style="left:943px;top:595px;width:204px;height:3px;"></div>
<div class="hl" style="left:943px;top:616px;width:204px;height:3px;"></div>
<div class="hl" style="left:943px;top:676px;width:204px;height:3px;"></div>
<div class="hl" style="left:943px;top:697px;width:204px;height:3px;"></div>
<div class="hl" style="left:943px;top:717px;width:204px;height:3px;"></div>
<div class="hl" style="left:943px;top:719px;width:204px;height:3px;"></div>
<div style="left:154px;top:283px;width:211px;height:1px;background:#000000;"></div>
<div style="left:154px;top:334px;width:211px;height:1px;background:#000000;"></div>
<div style="left:154px;top:283px;width:1px;height:52px;background:#000000;"></div>
<div style="left:364px;top:283px;width:1px;height:52px;background:#000000;"></div>
<div style="left:449px;top:283px;width:305px;height:1px;background:#000000;"></div>
<div style="left:449px;top:334px;width:305px;height:1px;background:#000000;"></div>
<div style="left:449px;top:283px;width:1px;height:52px;background:#000000;"></div>
<div style="left:753px;top:283px;width:1px;height:52px;background:#000000;"></div>
<div style="left:154px;top:334px;width:1px;height:386px;background:#000000;"></div>
<div style="left:259px;top:334px;width:1px;height:386px;background:#000000;"></div>
<div style="left:364px;top:334px;width:1px;height:386px;background:#000000;"></div>
<div style="left:449px;top:334px;width:1px;height:386px;background:#000000;"></div>
<div style="left:525px;top:334px;width:1px;height:386px;background:#000000;"></div>
<div style="left:601px;top:334px;width:1px;height:386px;background:#000000;"></div>
<div style="left:677px;top:334px;width:1px;height:386px;background:#000000;"></div>
<div style="left:753px;top:334px;width:1px;height:386px;background:#000000;"></div>
<div style="left:831px;top:334px;width:1px;height:386px;background:#000000;"></div>
<div style="left:917px;top:334px;width:1px;height:386px;background:#000000;"></div>
<div style="left:154px;top:334px;width:764px;height:1px;background:#000000;"></div>
<div style="left:26px;top:374px;width:892px;height:1px;background:#000000;"></div>
<div style="left:26px;top:434px;width:892px;height:1px;background:#000000;"></div>
<div style="left:26px;top:515px;width:892px;height:1px;background:#000000;"></div>
<div style="left:26px;top:596px;width:892px;height:1px;background:#000000;"></div>
<div style="left:26px;top:677px;width:892px;height:1px;background:#000000;"></div>
<div style="left:26px;top:454px;width:892px;height:2px;background:#000000;"></div>
<div style="left:26px;top:535px;width:892px;height:2px;background:#000000;"></div>
<div style="left:26px;top:616px;width:892px;height:2px;background:#000000;"></div>
<div style="left:26px;top:697px;width:892px;height:2px;background:#000000;"></div>
<div style="left:26px;top:718px;width:892px;height:1px;background:#000000;"></div>
<div style="left:26px;top:720px;width:892px;height:1px;background:#000000;"></div>
<div style="left:944px;top:334px;width:202px;height:1px;background:#000000;"></div>
<div style="left:944px;top:374px;width:202px;height:1px;background:#000000;"></div>
<div style="left:944px;top:334px;width:1px;height:365px;background:#000000;"></div>
<div style="left:1145px;top:334px;width:1px;height:365px;background:#000000;"></div>
<div style="left:944px;top:434px;width:202px;height:1px;background:#000000;"></div>
<div style="left:944px;top:455px;width:202px;height:1px;background:#000000;"></div>
<div style="left:944px;top:515px;width:202px;height:1px;background:#000000;"></div>
<div style="left:944px;top:536px;width:202px;height:1px;background:#000000;"></div>
<div style="left:944px;top:596px;width:202px;height:1px;background:#000000;"></div>
<div style="left:944px;top:617px;width:202px;height:1px;background:#000000;"></div>
<div style="left:944px;top:677px;width:202px;height:1px;background:#000000;"></div>
<div style="left:944px;top:698px;width:202px;height:1px;background:#000000;"></div>
<div style="left:944px;top:718px;width:202px;height:1px;background:#000000;"></div>
<div style="left:944px;top:720px;width:202px;height:1px;background:#000000;"></div>
<div style="left:24px;top:222px;width:132px;height:23px;border:2px solid #217346;box-sizing:border-box;"></div>
<div style="left:152px;top:241px;width:6px;height:6px;background:#217346;border:1px solid #efefef;box-sizing:border-box;"></div>
<div style="left:153px;top:242px;width:4px;height:4px;background:#217346;"></div>
<div style="left:1265px;top:204px;width:19px;height:568px;background:#e0e0e0;"></div>
<div style="left:1264px;top:223px;width:1px;height:549px;background:#a6a6a6;"></div>
<div style="left:1px;top:771px;width:1264px;height:1px;background:#a6a6a6;"></div>
<div style="left:1268px;top:733px;width:15px;height:25px;background:#d3d3d3;"></div>
<div style="left:1268px;top:206px;width:15px;height:15px;background:#f0f0f0;border:1px solid #ababab;box-sizing:border-box;"></div>
<svg style="left:1272px;top:211px;" width="8" height="5" viewBox="0 0 8 5"><path d="M0 4.500h7.500l-3.750-4.500z" fill="#6a6a6a"/></svg>
<div style="left:1268px;top:221px;width:15px;height:513px;background:#f0f0f0;border:1px solid #ababab;box-sizing:border-box;"></div>
<div style="left:1268px;top:757px;width:15px;height:15px;background:#f0f0f0;border:1px solid #ababab;box-sizing:border-box;"></div>
<svg style="left:1272px;top:763px;" width="8" height="5" viewBox="0 0 8 5"><path d="M0 0h7.500l-3.750 4.500z" fill="#6a6a6a"/></svg>
<div style="left:0px;top:772px;width:1285px;height:27px;background:#e1e1e1;"></div>
<div style="left:0px;top:799px;width:1285px;height:1px;background:#c4c4c4;"></div>
<div style="left:0px;top:800px;width:1285px;height:20px;background:#efefef;"></div>
<svg style="left:26px;top:780px;" width="6" height="9" viewBox="0 0 6 9"><path d="M5.500 0v9L0.500 4.500z" fill="#217346"/></svg>
<svg style="left:55px;top:780px;" width="6" height="9" viewBox="0 0 6 9"><path d="M0.500 0v9l5-4.500z" fill="#c2c2c2"/></svg>
<div style="left:100px;top:776px;width:1px;height:18px;background:#ababab;"></div>
<div style="left:174px;top:776px;width:1px;height:18px;background:#ababab;"></div>
<div style="left:301px;top:776px;width:1px;height:18px;background:#ababab;"></div>
<div style="left:402px;top:776px;width:1px;height:18px;background:#ababab;"></div>
<div style="left:516px;top:776px;width:1px;height:18px;background:#ababab;"></div>
<div style="left:771px;top:776px;width:1px;height:18px;background:#ababab;"></div>
<div style="left:824px;top:776px;width:1px;height:18px;background:#ababab;"></div>
<div style="left:871px;top:776px;width:1px;height:18px;background:#ababab;"></div>
<div style="left:103px;top:774px;width:69px;height:22px;background:#f2f200;"></div>
<div style="left:177px;top:774px;width:122px;height:22px;background:#f2f200;"></div>
<div style="left:304px;top:774px;width:96px;height:22px;background:#f2f200;"></div>
<div style="left:405px;top:774px;width:109px;height:22px;background:#f2f200;"></div>
<div style="left:519px;top:774px;width:67px;height:22px;background:#0070c0;"></div>
<div style="left:588px;top:771px;width:99px;height:24px;background:linear-gradient(#efefef,#eef1ea 45%,#d6e9c6);border-left:1px solid #a6a6a6;border-right:1px solid #a6a6a6;box-sizing:border-box;"></div>
<div style="left:588px;top:794px;width:99px;height:2px;background:#217346;"></div>
<div style="left:689px;top:774px;width:79px;height:22px;background:#92d050;"></div>
<div style="left:773px;top:774px;width:49px;height:22px;background:#92d050;"></div>
<div style="left:827px;top:774px;width:42px;height:22px;background:#92d050;"></div>
<svg style="left:905px;top:777px;" width="16" height="16" viewBox="0 0 16 16"><circle cx="8" cy="8" r="7" fill="none" stroke="#777" stroke-width="1.200"/><path d="M8 4v8M4 8h8" stroke="#777" stroke-width="1.600"/></svg>
<div style="left:982px;top:778px;width:2px;height:2px;background:#b5b5b5;"></div>
<div style="left:982px;top:783px;width:2px;height:2px;background:#b5b5b5;"></div>
<div style="left:982px;top:788px;width:2px;height:2px;background:#b5b5b5;"></div>
<div style="left:1000px;top:778px;width:267px;height:15px;background:#d3d3d3;"></div>
<div style="left:1000px;top:778px;width:14px;height:15px;background:#f0f0f0;border:1px solid #ababab;box-sizing:border-box;"></div>
<svg style="left:1004px;top:782px;" width="5" height="8" viewBox="0 0 5 8"><path d="M4.500 0v7.500L0 3.750z" fill="#6a6a6a"/></svg>
<div style="left:1013px;top:778px;width:218px;height:15px;background:#f0f0f0;border:1px solid #ababab;box-sizing:border-box;"></div>
<div style="left:1252px;top:778px;width:15px;height:15px;background:#f0f0f0;border:1px solid #ababab;box-sizing:border-box;"></div>
<svg style="left:1258px;top:782px;" width="5" height="8" viewBox="0 0 5 8"><path d="M0 0v7.500l4.500-3.750z" fill="#6a6a6a"/></svg>
<div style="left:987px;top:799px;width:37px;height:21px;background:#c6c6c6;"></div>
<svg style="left:998px;top:803px;" width="14" height="13" viewBox="0 0 14 13"><rect x="0.500" y="0.500" width="13" height="12" fill="none" stroke="#555"/><path d="M0.500 4.500h13M0.500 8.500h13M4.800 0.500v12M9.200 0.500v12" stroke="#555"/></svg>
<svg style="left:1036px;top:803px;" width="14" height="13" viewBox="0 0 14 13"><rect x="0.500" y="0.500" width="13" height="12" fill="none" stroke="#555"/><rect x="3.500" y="2.500" width="7" height="8" fill="none" stroke="#555"/><path d="M5 4.500h4M5 6.500h4M5 8.500h4" stroke="#555" stroke-width="0.800"/></svg>
<svg style="left:1074px;top:803px;" width="14" height="13" viewBox="0 0 14 13"><rect x="0.500" y="0.500" width="13" height="12" fill="none" stroke="#555"/><path d="M4.500 0.500v6h9M9 0.500v6" stroke="#555" fill="none"/></svg>
<div style="left:1104px;top:809px;width:7px;height:1.5px;background:#555;"></div>
<div style="left:1115px;top:809px;width:100px;height:1px;background:#9a9a9a;"></div>
<div style="left:1163px;top:803px;width:4px;height:13px;background:#555;"></div>
<div style="left:1218px;top:809px;width:8px;height:1.5px;background:#555;"></div>
<div style="left:1221.3px;top:805.7px;width:1.5px;height:8px;background:#555;"></div>
<span style="font-size:12px;line-height:12px;color:#ffffff;top:11.34px;letter-spacing:-0.214px;left:491.70px;">EÜR-2018-Vorsteuerabzugsberechtigt-Muster.xlsx  -  Excel</span>
<span style="font-size:12px;line-height:12px;color:#ffffff;top:10.34px;letter-spacing:0.119px;left:1026.70px;">Anmelden</span>
<span style="font-size:12px;line-height:12px;color:#fff;top:43.84px;letter-spacing:-0.003px;left:15.70px;">Datei</span>
<span style="font-size:12px;line-height:12px;color:#217346;top:43.84px;letter-spacing:0.031px;left:73.70px;">Start</span>
<span style="font-size:12px;line-height:12px;color:#fff;top:43.84px;letter-spacing:0.016px;left:126.70px;">Einfügen</span>
<span style="font-size:12px;line-height:12px;color:#fff;top:43.84px;letter-spacing:0.079px;left:201.70px;">Seitenlayout</span>
<span style="font-size:12px;line-height:12px;color:#fff;top:43.84px;letter-spacing:0.141px;left:296.70px;">Formeln</span>
<span style="font-size:12px;line-height:12px;color:#fff;top:43.84px;letter-spacing:-0.006px;left:369.70px;">Daten</span>
<span style="font-size:12px;line-height:12px;color:#fff;top:43.84px;letter-spacing:0.045px;left:429.70px;">Überprüfen</span>
<span style="font-size:12px;line-height:12px;color:#fff;top:43.84px;letter-spacing:0.234px;left:518.70px;">Ansicht</span>
<span style="font-size:12px;line-height:12px;color:#cfe3d7;top:43.84px;letter-spacing:-0.164px;left:605.20px;">Was möchten Sie tun?</span>
<span style="font-size:12px;line-height:12px;color:#fff;top:44.34px;letter-spacing:-0.227px;left:1210.20px;">Freigeben</span>
<span style="font-size:12.5px;line-height:12.5px;color:#444;top:175.92px;letter-spacing:0.852px;left:11.70px;">A1</span>
<span style="font-size:13px;line-height:13px;font-weight:bold;font-style:italic;font-family:'Liberation Serif',serif;color:#6a6a6a;top:175.00px;left:222.50px;">f</span>
<span style="font-size:10px;line-height:10px;font-weight:bold;font-style:italic;font-family:'Liberation Serif',serif;color:#6a6a6a;top:178.53px;left:227.00px;">x</span>
<span style="font-size:11.5px;line-height:11.5px;color:#555;top:143.77px;letter-spacing:0.028px;left:2.70px;">Zwischenablage</span>
<span style="font-size:11.5px;line-height:11.5px;color:#555;top:143.77px;letter-spacing:0.048px;left:177.20px;">Schriftart</span>
<span style="font-size:11.5px;line-height:11.5px;color:#555;top:143.77px;letter-spacing:0.251px;left:355.70px;">Ausrichtung</span>
<span style="font-size:11.5px;line-height:11.5px;color:#555;top:143.77px;letter-spacing:0.031px;left:528.70px;">Zahl</span>
<span style="font-size:11.5px;line-height:11.5px;color:#555;top:143.77px;letter-spacing:0.032px;left:722.20px;">Formatvorlagen</span>
<span style="font-size:11.5px;line-height:11.5px;color:#555;top:143.77px;letter-spacing:-0.055px;left:939.70px;">Zellen</span>
<span style="font-size:11.5px;line-height:11.5px;color:#555;top:143.77px;letter-spacing:-0.013px;left:1072.20px;">Bearbeiten</span>
<span style="font-size:12.5px;line-height:12.5px;color:#a6a6a6;top:107.92px;letter-spacing:-0.357px;left:11.20px;">Einfügen</span>
<span style="font-size:12.3px;line-height:12.3px;color:#333;top:82.39px;letter-spacing:-0.123px;left:113.20px;">Calibri</span>
<span style="font-size:12.3px;line-height:12.3px;color:#333;top:82.39px;letter-spacing:-1.033px;left:224.50px;">11</span>
<span style="font-size:13.5px;line-height:13.5px;-webkit-text-stroke:0.4px;color:#555;top:82.07px;left:269.90px;">A</span>
<span style="font-size:11px;line-height:11px;-webkit-text-stroke:0.4px;color:#555;top:84.19px;left:293.00px;">A</span>
<span style="font-size:11.8px;line-height:11.8px;font-weight:bold;color:#444;top:112.01px;left:118.10px;">F</span>
<span style="font-size:11.8px;line-height:11.8px;font-weight:bold;font-style:italic;color:#444;top:112.01px;left:138.20px;">K</span>
<span style="font-size:11.5px;line-height:11.5px;font-weight:bold;color:#444;top:111.77px;left:160.20px;">U</span>
<span style="font-size:13.2px;line-height:13.2px;-webkit-text-stroke:0.4px;color:#555;top:110.33px;left:280.20px;">A</span>
<span style="font-size:12.3px;line-height:12.3px;color:#333;top:82.39px;letter-spacing:-0.428px;left:486.50px;">Standard</span>
<span style="font-size:15.5px;line-height:15.5px;-webkit-text-stroke:0.400px;color:#444;top:111.18px;left:522.40px;">%</span>
<span style="font-size:9.5px;line-height:9.5px;-webkit-text-stroke:0.300px;color:#444;top:112.96px;letter-spacing:-0.353px;left:542.50px;">000</span>
<span style="font-size:8.5px;line-height:8.5px;-webkit-text-stroke:0.300px;color:#444;top:110.30px;left:580.50px;">,0</span>
<span style="font-size:8.5px;line-height:8.5px;-webkit-text-stroke:0.300px;color:#444;top:118.30px;left:574.00px;">,00</span>
<span style="font-size:8.5px;line-height:8.5px;-webkit-text-stroke:0.300px;color:#444;top:110.30px;left:599.00px;">,00</span>
<span style="font-size:8.5px;line-height:8.5px;-webkit-text-stroke:0.300px;color:#444;top:118.30px;left:603.50px;">,0</span>
<span style="font-size:12.5px;line-height:12.5px;color:#444444;top:107.92px;letter-spacing:-0.295px;left:642.20px;">Bedingte</span>
<span style="font-size:12.5px;line-height:12.5px;color:#444444;top:123.92px;letter-spacing:-0.279px;left:625.20px;">Formatierung</span>
<span style="font-size:12.5px;line-height:12.5px;color:#444444;top:107.92px;letter-spacing:-0.339px;left:716.70px;">Als Tabelle</span>
<span style="font-size:12.5px;line-height:12.5px;color:#444444;top:123.92px;letter-spacing:-0.067px;left:709.70px;">formatieren</span>
<span style="font-size:12.5px;line-height:12.5px;color:#444444;top:107.92px;letter-spacing:-0.146px;left:784.70px;">Zellenformatvorlagen</span>
<span style="font-size:12.5px;line-height:12.5px;color:#444444;top:73.92px;letter-spacing:-0.395px;left:933.30px;">Einfügen</span>
<span style="font-size:12.5px;line-height:12.5px;color:#444444;top:96.92px;letter-spacing:-0.509px;left:933.30px;">Löschen</span>
<span style="font-size:12.5px;line-height:12.5px;color:#444444;top:120.22px;letter-spacing:-0.199px;left:933.30px;">Format</span>
<span style="font-size:16px;line-height:16px;font-weight:bold;color:#3b78c4;top:72.46px;left:1067.00px;">A</span>
<span style="font-size:15.5px;line-height:15.5px;font-weight:bold;color:#9a4fb3;top:86.88px;left:1067.90px;">Z</span>
<span style="font-size:12.5px;line-height:12.5px;color:#444444;top:107.92px;letter-spacing:-0.351px;left:1046.20px;">Sortieren und</span>
<span style="font-size:12.5px;line-height:12.5px;color:#444444;top:123.92px;letter-spacing:-0.248px;left:1061.20px;">Filtern</span>
<span style="font-size:12.5px;line-height:12.5px;color:#444444;top:107.92px;letter-spacing:-0.373px;left:1123.70px;">Suchen und</span>
<span style="font-size:12.5px;line-height:12.5px;color:#444444;top:123.92px;letter-spacing:-0.351px;left:1122.20px;">Auswählen</span>
<span style="font-size:12.5px;line-height:12.5px;color:#217346;top:207.92px;left:85.83px;">A</span>
<span style="font-size:12.5px;line-height:12.5px;color:#262626;top:207.92px;left:202.83px;">B</span>
<span style="font-size:12.5px;line-height:12.5px;color:#262626;top:207.92px;left:307.48px;">C</span>
<span style="font-size:12.5px;line-height:12.5px;color:#262626;top:207.92px;left:402.48px;">D</span>
<span style="font-size:12.5px;line-height:12.5px;color:#262626;top:207.92px;left:483.33px;">E</span>
<span style="font-size:12.5px;line-height:12.5px;color:#262626;top:207.92px;left:559.68px;">F</span>
<span style="font-size:12.5px;line-height:12.5px;color:#262626;top:207.92px;left:634.63px;">G</span>
<span style="font-size:12.5px;line-height:12.5px;color:#262626;top:207.92px;left:710.98px;">H</span>
<span style="font-size:12.5px;line-height:12.5px;color:#262626;top:207.92px;left:790.76px;">I</span>
<span style="font-size:12.5px;line-height:12.5px;color:#262626;top:207.92px;left:871.38px;">J</span>
<span style="font-size:12.5px;line-height:12.5px;color:#262626;top:207.92px;left:926.83px;">K</span>
<span style="font-size:12.5px;line-height:12.5px;color:#262626;top:207.92px;left:1041.52px;">L</span>
<span style="font-size:12.5px;line-height:12.5px;color:#262626;top:207.92px;left:1180.29px;">M</span>
<span style="font-size:12.5px;line-height:12.5px;color:#217346;top:228.92px;left:9.32px;">1</span>
<span style="font-size:12.5px;line-height:12.5px;color:#262626;top:268.92px;left:9.32px;">2</span>
<span style="font-size:12.5px;line-height:12.5px;color:#262626;top:319.92px;left:9.32px;">3</span>
<span style="font-size:12.5px;line-height:12.5px;color:#262626;top:359.92px;left:9.32px;">4</span>
<span style="font-size:12.5px;line-height:12.5px;color:#262626;top:379.92px;left:9.32px;">5</span>
<span style="font-size:12.5px;line-height:12.5px;color:#262626;top:399.92px;left:9.32px;">6</span>
<span style="font-size:12.5px;line-height:12.5px;color:#262626;top:419.92px;left:9.32px;">7</span>
<span style="font-size:12.5px;line-height:12.5px;color:#262626;top:439.92px;left:9.32px;">8</span>
<span style="font-size:12.5px;line-height:12.5px;color:#262626;top:460.92px;left:9.32px;">9</span>
<span style="font-size:12.5px;line-height:12.5px;color:#262626;top:480.92px;left:5.85px;">10</span>
<span style="font-size:12.5px;line-height:12.5px;color:#262626;top:500.92px;left:6.31px;">11</span>
<span style="font-size:12.5px;line-height:12.5px;color:#262626;top:520.92px;left:5.85px;">12</span>
<span style="font-size:12.5px;line-height:12.5px;color:#262626;top:541.92px;left:5.85px;">13</span>
<span style="font-size:12.5px;line-height:12.5px;color:#262626;top:561.92px;left:5.85px;">14</span>
<span style="font-size:12.5px;line-height:12.5px;color:#262626;top:581.92px;left:5.85px;">15</span>
<span style="font-size:12.5px;line-height:12.5px;color:#262626;top:601.92px;left:5.85px;">16</span>
<span style="font-size:12.5px;line-height:12.5px;color:#262626;top:622.92px;left:5.85px;">17</span>
<span style="font-size:12.5px;line-height:12.5px;color:#262626;top:642.92px;left:5.85px;">18</span>
<span style="font-size:12.5px;line-height:12.5px;color:#262626;top:662.92px;left:5.85px;">19</span>
<span style="font-size:12.5px;line-height:12.5px;color:#262626;top:682.92px;left:5.85px;">20</span>
<span style="font-size:12.5px;line-height:12.5px;color:#262626;top:703.92px;left:5.85px;">21</span>
<span style="font-size:12.5px;line-height:12.5px;color:#262626;top:725.92px;left:5.85px;">22</span>
<span style="font-size:12.5px;line-height:12.5px;color:#262626;top:745.92px;left:5.85px;">23</span>
<span style="font-size:13.2px;line-height:13.2px;-webkit-text-stroke:0.220px;color:#000000;top:247.83px;letter-spacing:0.329px;left:28.50px;">Kennzahl im</span>
<span style="font-size:13.2px;line-height:13.2px;-webkit-text-stroke:0.220px;color:#000000;top:267.83px;letter-spacing:0.464px;left:28.50px;">amtlichen Vordruck</span>
<span style="font-size:12.6px;line-height:12.6px;-webkit-text-stroke:0.200px;color:#000000;top:269.33px;left:242.98px;">81</span>
<span style="font-size:12.6px;line-height:12.6px;-webkit-text-stroke:0.200px;color:#000000;top:269.33px;left:347.98px;">86</span>
<span style="font-size:12.6px;line-height:12.6px;-webkit-text-stroke:0.200px;color:#000000;top:269.33px;left:814.98px;">66</span>
<span style="font-size:13.2px;line-height:13.2px;-webkit-text-stroke:0.220px;color:#000000;top:292.83px;letter-spacing:0.325px;left:174.60px;">Steuerpfl. Umsätze einschl.</span>
<span style="font-size:13.2px;line-height:13.2px;-webkit-text-stroke:0.220px;color:#000000;top:312.83px;letter-spacing:0.511px;left:168.40px;">unentgeltlicher Wertabgaben</span>
<span style="font-size:13.2px;line-height:13.2px;-webkit-text-stroke:0.220px;color:#000000;top:302.83px;letter-spacing:0.356px;left:559.20px;">Vorsteuer aus</span>
<span style="font-size:13.2px;line-height:13.2px;-webkit-text-stroke:0.220px;color:#000000;top:348.83px;letter-spacing:-0.569px;left:194.00px;">19%</span>
<span style="font-size:13.2px;line-height:13.2px;-webkit-text-stroke:0.220px;color:#000000;top:348.83px;letter-spacing:-0.781px;left:303.30px;">7%</span>
<span style="font-size:13.2px;line-height:13.2px;-webkit-text-stroke:0.220px;color:#000000;top:348.83px;letter-spacing:0.073px;left:469.60px;">Ausg.</span>
<span style="font-size:13.2px;line-height:13.2px;-webkit-text-stroke:0.220px;color:#000000;top:338.83px;letter-spacing:0.314px;left:368.30px;">Geschuldete</span>
<span style="font-size:13.2px;line-height:13.2px;-webkit-text-stroke:0.220px;color:#000000;top:358.83px;letter-spacing:-0.389px;left:395.00px;">USt.</span>
<span style="font-size:13.2px;line-height:13.2px;-webkit-text-stroke:0.220px;color:#000000;top:338.83px;letter-spacing:0.350px;left:534.80px;">Anlagen-</span>
<span style="font-size:13.2px;line-height:13.2px;-webkit-text-stroke:0.220px;color:#000000;top:358.83px;letter-spacing:0.257px;left:540.10px;">Spiegel</span>
<span style="font-size:13.2px;line-height:13.2px;-webkit-text-stroke:0.220px;color:#000000;top:338.83px;letter-spacing:0.550px;left:614.50px;">Bewirt.-</span>
<span style="font-size:13.2px;line-height:13.2px;-webkit-text-stroke:0.220px;color:#000000;top:358.83px;letter-spacing:0.206px;left:618.30px;">Kosten</span>
<span style="font-size:13.2px;line-height:13.2px;-webkit-text-stroke:0.220px;color:#000000;top:338.83px;letter-spacing:-0.315px;left:696.70px;">GWG-</span>
<span style="font-size:13.2px;line-height:13.2px;-webkit-text-stroke:0.220px;color:#000000;top:358.83px;letter-spacing:0.266px;left:683.70px;">Sammelp.</span>
<span style="font-size:13.2px;line-height:13.2px;-webkit-text-stroke:0.220px;color:#000000;top:338.83px;letter-spacing:0.398px;left:756.80px;">Abziehbare</span>
<span style="font-size:13.2px;line-height:13.2px;-webkit-text-stroke:0.220px;color:#000000;top:358.83px;letter-spacing:0.594px;left:762.20px;">Vorsteuer</span>
<span style="font-size:13.2px;line-height:13.2px;-webkit-text-stroke:0.220px;color:#000000;top:338.83px;letter-spacing:0.265px;left:835.00px;">zu zahlender</span>
<span style="font-size:13.2px;line-height:13.2px;-webkit-text-stroke:0.220px;color:#000000;top:358.83px;letter-spacing:0.157px;left:855.40px;">Betrag</span>
<span style="font-size:13.2px;line-height:13.2px;-webkit-text-stroke:0.220px;color:#000000;top:338.83px;letter-spacing:0.419px;left:948.90px;">An das Finanzamt übermittelte</span>
<span style="font-size:13.2px;line-height:13.2px;-webkit-text-stroke:0.220px;color:#000000;top:358.83px;letter-spacing:0.247px;left:959.10px;">Betrag (Vorauszahlungssoll)</span>
<span style="font-size:12.6px;line-height:12.6px;-webkit-text-stroke:0.200px;color:#000000;top:380.33px;left:144.98px;">1</span>
<span style="font-size:12.6px;line-height:12.6px;-webkit-text-stroke:0.200px;color:#000000;top:380.33px;letter-spacing:0.070px;left:193.34px;">4.000,00 €</span>
<span style="font-size:12.6px;line-height:12.6px;-webkit-text-stroke:0.200px;color:#000000;top:380.33px;left:351.48px;">€</span>
<span style="font-size:12.6px;line-height:12.6px;-webkit-text-stroke:0.200px;color:#000000;top:380.33px;left:337.00px;">-</span>
<span style="font-size:12.6px;line-height:12.6px;-webkit-text-stroke:0.200px;color:#000000;top:380.33px;letter-spacing:0.070px;left:393.98px;">760,00 €</span>
<span style="font-size:12.6px;line-height:12.6px;-webkit-text-stroke:0.200px;color:#000000;top:380.33px;letter-spacing:0.070px;left:477.05px;">66,50 €</span>
<span style="font-size:12.6px;line-height:12.6px;-webkit-text-stroke:0.200px;color:#000000;top:380.33px;left:588.48px;">€</span>
<span style="font-size:12.6px;line-height:12.6px;-webkit-text-stroke:0.200px;color:#000000;top:380.33px;left:574.00px;">-</span>
<span style="font-size:12.6px;line-height:12.6px;-webkit-text-stroke:0.200px;color:#000000;top:380.33px;left:664.48px;">€</span>
<span style="font-size:12.6px;line-height:12.6px;-webkit-text-stroke:0.200px;color:#000000;top:380.33px;left:650.00px;">-</span>
<span style="font-size:12.6px;line-height:12.6px;-webkit-text-stroke:0.200px;color:#000000;top:380.33px;left:740.48px;">€</span>
<span style="font-size:12.6px;line-height:12.6px;-webkit-text-stroke:0.200px;color:#000000;top:380.33px;left:726.00px;">-</span>
<span style="font-size:12.6px;line-height:12.6px;-webkit-text-stroke:0.200px;color:#000000;top:380.33px;letter-spacing:0.070px;left:783.05px;">66,50 €</span>
<span style="font-size:12.6px;line-height:12.6px;-webkit-text-stroke:0.200px;color:#000000;top:380.33px;letter-spacing:0.070px;left:861.98px;">693,50 €</span>
<span style="font-size:12.6px;line-height:12.6px;-webkit-text-stroke:0.200px;color:#000000;top:400.33px;left:144.98px;">2</span>
<span style="font-size:12.6px;line-height:12.6px;-webkit-text-stroke:0.200px;color:#000000;top:400.33px;letter-spacing:0.070px;left:193.34px;">5.000,00 €</span>
<span style="font-size:12.6px;line-height:12.6px;-webkit-text-stroke:0.200px;color:#000000;top:400.33px;left:351.48px;">€</span>
<span style="font-size:12.6px;line-height:12.6px;-webkit-text-stroke:0.200px;color:#000000;top:400.33px;left:337.00px;">-</span>
<span style="font-size:12.6px;line-height:12.6px;-webkit-text-stroke:0.200px;color:#000000;top:400.33px;letter-spacing:0.070px;left:393.98px;">950,00 €</span>
<span style="font-size:12.6px;line-height:12.6px;-webkit-text-stroke:0.200px;color:#000000;top:400.33px;letter-spacing:0.070px;left:459.34px;">1.140,00 €</span>
<span style="font-size:12.6px;line-height:12.6px;-webkit-text-stroke:0.200px;color:#000000;top:400.33px;left:588.48px;">€</span>
<span style="font-size:12.6px;line-height:12.6px;-webkit-text-stroke:0.200px;color:#000000;top:400.33px;left:574.00px;">-</span>
<span style="font-size:12.6px;line-height:12.6px;-webkit-text-stroke:0.200px;color:#000000;top:400.33px;left:664.48px;">€</span>
<span style="font-size:12.6px;line-height:12.6px;-webkit-text-stroke:0.200px;color:#000000;top:400.33px;left:650.00px;">-</span>
<span style="font-size:12.6px;line-height:12.6px;-webkit-text-stroke:0.200px;color:#000000;top:400.33px;left:740.48px;">€</span>
<span style="font-size:12.6px;line-height:12.6px;-webkit-text-stroke:0.200px;color:#000000;top:400.33px;left:726.00px;">-</span>
<span style="font-size:12.6px;line-height:12.6px;-webkit-text-stroke:0.200px;color:#000000;top:400.33px;letter-spacing:0.070px;left:765.34px;">1.140,00 €</span>
<span style="font-size:12.6px;line-height:12.6px;-webkit-text-stroke:0.200px;color:#000000;top:400.33px;letter-spacing:0.070px;left:861.98px;">190,00 €</span>
<span style="font-size:12.6px;line-height:12.6px;-webkit-text-stroke:0.200px;color:#000000;top:400.33px;left:834.00px;">-</span>
<span style="font-size:12.6px;line-height:12.6px;-webkit-text-stroke:0.200px;color:#000000;top:420.33px;left:144.98px;">3</span>
<span style="font-size:12.6px;line-height:12.6px;-webkit-text-stroke:0.200px;color:#000000;top:420.33px;left:246.48px;">€</span>
<span style="font-size:12.6px;line-height:12.6px;-webkit-text-stroke:0.200px;color:#000000;top:420.33px;left:232.00px;">-</span>
<span style="font-size:12.6px;line-height:12.6px;-webkit-text-stroke:0.200px;color:#000000;top:420.33px;left:351.48px;">€</span>
<span style="font-size:12.6px;line-height:12.6px;-webkit-text-stroke:0.200px;color:#000000;top:420.33px;left:337.00px;">-</span>
<span style="font-size:12.6px;line-height:12.6px;-webkit-text-stroke:0.200px;color:#000000;top:420.33px;left:436.48px;">€</span>
<span style="font-size:12.6px;line-height:12.6px;-webkit-text-stroke:0.200px;color:#000000;top:420.33px;left:422.00px;">-</span>
<span style="font-size:12.6px;line-height:12.6px;-webkit-text-stroke:0.200px;color:#000000;top:420.33px;letter-spacing:0.070px;left:477.05px;">38,00 €</span>
<span style="font-size:12.6px;line-height:12.6px;-webkit-text-stroke:0.200px;color:#000000;top:420.33px;left:588.48px;">€</span>
<span style="font-size:12.6px;line-height:12.6px;-webkit-text-stroke:0.200px;color:#000000;top:420.33px;left:574.00px;">-</span>
<span style="font-size:12.6px;line-height:12.6px;-webkit-text-stroke:0.200px;color:#000000;top:420.33px;left:664.48px;">€</span>
<span style="font-size:12.6px;line-height:12.6px;-webkit-text-stroke:0.200px;color:#000000;top:420.33px;left:650.00px;">-</span>
<span style="font-size:12.6px;line-height:12.6px;-webkit-text-stroke:0.200px;color:#000000;top:420.33px;left:740.48px;">€</span>
<span style="font-size:12.6px;line-height:12.6px;-webkit-text-stroke:0.200px;color:#000000;top:420.33px;left:726.00px;">-</span>
<span style="font-size:12.6px;line-height:12.6px;-webkit-text-stroke:0.200px;color:#000000;top:420.33px;letter-spacing:0.070px;left:783.05px;">38,00 €</span>
<span style="font-size:12.6px;line-height:12.6px;-webkit-text-stroke:0.200px;color:#000000;top:420.33px;letter-spacing:0.070px;left:869.05px;">38,00 €</span>
<span style="font-size:12.6px;line-height:12.6px;-webkit-text-stroke:0.200px;color:#000000;top:420.33px;left:834.00px;">-</span>
<span style="font-size:13.2px;line-height:13.2px;font-weight:bold;color:#000000;top:437.83px;letter-spacing:-0.144px;left:28.20px;">1. Quartal</span>
<span style="font-size:12.6px;line-height:12.6px;font-weight:bold;color:#000000;top:439.33px;letter-spacing:0.070px;left:193.34px;">9.000,00 €</span>
<span style="font-size:12.6px;line-height:12.6px;font-weight:bold;color:#000000;top:439.33px;left:351.48px;">€</span>
<span style="font-size:12.6px;line-height:12.6px;font-weight:bold;color:#000000;top:439.33px;left:337.00px;">-</span>
<span style="font-size:12.6px;line-height:12.6px;font-weight:bold;color:#000000;top:439.33px;letter-spacing:0.070px;left:383.34px;">1.710,00 €</span>
<span style="font-size:12.6px;line-height:12.6px;font-weight:bold;color:#000000;top:439.33px;letter-spacing:0.070px;left:459.34px;">1.244,50 €</span>
<span style="font-size:12.6px;line-height:12.6px;font-weight:bold;color:#000000;top:439.33px;left:588.48px;">€</span>
<span style="font-size:12.6px;line-height:12.6px;font-weight:bold;color:#000000;top:439.33px;left:574.00px;">-</span>
<span style="font-size:12.6px;line-height:12.6px;font-weight:bold;color:#000000;top:439.33px;left:664.48px;">€</span>
<span style="font-size:12.6px;line-height:12.6px;font-weight:bold;color:#000000;top:439.33px;left:650.00px;">-</span>
<span style="font-size:12.6px;line-height:12.6px;font-weight:bold;color:#000000;top:439.33px;left:740.48px;">€</span>
<span style="font-size:12.6px;line-height:12.6px;font-weight:bold;color:#000000;top:439.33px;left:726.00px;">-</span>
<span style="font-size:12.6px;line-height:12.6px;font-weight:bold;color:#000000;top:439.33px;letter-spacing:0.070px;left:765.34px;">1.244,50 €</span>
<span style="font-size:12.6px;line-height:12.6px;font-weight:bold;color:#000000;top:439.33px;letter-spacing:0.070px;left:861.98px;">465,50 €</span>
<span style="font-size:12.6px;line-height:12.6px;font-weight:bold;color:#000000;top:439.33px;letter-spacing:0.070px;left:1089.98px;">465,50 €</span>
<span style="font-size:12.6px;line-height:12.6px;-webkit-text-stroke:0.200px;color:#000000;top:461.33px;left:144.98px;">4</span>
<span style="font-size:12.6px;line-height:12.6px;-webkit-text-stroke:0.200px;color:#000000;top:461.33px;letter-spacing:0.070px;left:186.27px;">10.000,00 €</span>
<span style="font-size:12.6px;line-height:12.6px;-webkit-text-stroke:0.200px;color:#000000;top:461.33px;left:351.48px;">€</span>
<span style="font-size:12.6px;line-height:12.6px;-webkit-text-stroke:0.200px;color:#000000;top:461.33px;left:337.00px;">-</span>
<span style="font-size:12.6px;line-height:12.6px;-webkit-text-stroke:0.200px;color:#000000;top:461.33px;letter-spacing:0.070px;left:383.34px;">1.900,00 €</span>
<span style="font-size:12.6px;line-height:12.6px;-webkit-text-stroke:0.200px;color:#000000;top:461.33px;letter-spacing:0.070px;left:477.05px;">28,50 €</span>
<span style="font-size:12.6px;line-height:12.6px;-webkit-text-stroke:0.200px;color:#000000;top:461.33px;left:588.48px;">€</span>
<span style="font-size:12.6px;line-height:12.6px;-webkit-text-stroke:0.200px;color:#000000;top:461.33px;left:574.00px;">-</span>
<span style="font-size:12.6px;line-height:12.6px;-webkit-text-stroke:0.200px;color:#000000;top:461.33px;left:664.48px;">€</span>
<span style="font-size:12.6px;line-height:12.6px;-webkit-text-stroke:0.200px;color:#000000;top:461.33px;left:650.00px;">-</span>
<span style="font-size:12.6px;line-height:12.6px;-webkit-text-stroke:0.200px;color:#000000;top:461.33px;left:740.48px;">€</span>
<span style="font-size:12.6px;line-height:12.6px;-webkit-text-stroke:0.200px;color:#000000;top:461.33px;left:726.00px;">-</span>
<span style="font-size:12.6px;line-height:12.6px;-webkit-text-stroke:0.200px;color:#000000;top:461.33px;letter-spacing:0.070px;left:783.05px;">28,50 €</span>
<span style="font-size:12.6px;line-height:12.6px;-webkit-text-stroke:0.200px;color:#000000;top:461.33px;letter-spacing:0.070px;left:851.34px;">1.871,50 €</span>
<span style="font-size:12.6px;line-height:12.6px;-webkit-text-stroke:0.200px;color:#000000;top:481.33px;left:144.98px;">5</span>
<span style="font-size:12.6px;line-height:12.6px;-webkit-text-stroke:0.200px;color:#000000;top:481.33px;letter-spacing:0.070px;left:193.34px;">7.760,00 €</span>
<span style="font-size:12.6px;line-height:12.6px;-webkit-text-stroke:0.200px;color:#000000;top:481.33px;left:351.48px;">€</span>
<span style="font-size:12.6px;line-height:12.6px;-webkit-text-stroke:0.200px;color:#000000;top:481.33px;left:337.00px;">-</span>
<span style="font-size:12.6px;line-height:12.6px;-webkit-text-stroke:0.200px;color:#000000;top:481.33px;letter-spacing:0.070px;left:383.34px;">1.474,40 €</span>
<span style="font-size:12.6px;line-height:12.6px;-webkit-text-stroke:0.200px;color:#000000;top:481.33px;left:512.48px;">€</span>
<span style="font-size:12.6px;line-height:12.6px;-webkit-text-stroke:0.200px;color:#000000;top:481.33px;left:498.00px;">-</span>
<span style="font-size:12.6px;line-height:12.6px;-webkit-text-stroke:0.200px;color:#000000;top:481.33px;left:588.48px;">€</span>
<span style="font-size:12.6px;line-height:12.6px;-webkit-text-stroke:0.200px;color:#000000;top:481.33px;left:574.00px;">-</span>
<span style="font-size:12.6px;line-height:12.6px;-webkit-text-stroke:0.200px;color:#000000;top:481.33px;left:664.48px;">€</span>
<span style="font-size:12.6px;line-height:12.6px;-webkit-text-stroke:0.200px;color:#000000;top:481.33px;left:650.00px;">-</span>
<span style="font-size:12.6px;line-height:12.6px;-webkit-text-stroke:0.200px;color:#000000;top:481.33px;left:740.48px;">€</span>
<span style="font-size:12.6px;line-height:12.6px;-webkit-text-stroke:0.200px;color:#000000;top:481.33px;left:726.00px;">-</span>
<span style="font-size:12.6px;line-height:12.6px;-webkit-text-stroke:0.200px;color:#000000;top:481.33px;left:818.48px;">€</span>
<span style="font-size:12.6px;line-height:12.6px;-webkit-text-stroke:0.200px;color:#000000;top:481.33px;left:804.00px;">-</span>
<span style="font-size:12.6px;line-height:12.6px;-webkit-text-stroke:0.200px;color:#000000;top:481.33px;letter-spacing:0.070px;left:851.34px;">1.474,40 €</span>
<span style="font-size:12.6px;line-height:12.6px;-webkit-text-stroke:0.200px;color:#000000;top:501.33px;left:144.98px;">6</span>
<span style="font-size:12.6px;line-height:12.6px;-webkit-text-stroke:0.200px;color:#000000;top:501.33px;left:246.48px;">€</span>
<span style="font-size:12.6px;line-height:12.6px;-webkit-text-stroke:0.200px;color:#000000;top:501.33px;left:232.00px;">-</span>
<span style="font-size:12.6px;line-height:12.6px;-webkit-text-stroke:0.200px;color:#000000;top:501.33px;left:351.48px;">€</span>
<span style="font-size:12.6px;line-height:12.6px;-webkit-text-stroke:0.200px;color:#000000;top:501.33px;left:337.00px;">-</span>
<span style="font-size:12.6px;line-height:12.6px;-webkit-text-stroke:0.200px;color:#000000;top:501.33px;left:436.48px;">€</span>
<span style="font-size:12.6px;line-height:12.6px;-webkit-text-stroke:0.200px;color:#000000;top:501.33px;left:422.00px;">-</span>
<span style="font-size:12.6px;line-height:12.6px;-webkit-text-stroke:0.200px;color:#000000;top:501.33px;left:512.48px;">€</span>
<span style="font-size:12.6px;line-height:12.6px;-webkit-text-stroke:0.200px;color:#000000;top:501.33px;left:498.00px;">-</span>
<span style="font-size:12.6px;line-height:12.6px;-webkit-text-stroke:0.200px;color:#000000;top:501.33px;left:588.48px;">€</span>
<span style="font-size:12.6px;line-height:12.6px;-webkit-text-stroke:0.200px;color:#000000;top:501.33px;left:574.00px;">-</span>
<span style="font-size:12.6px;line-height:12.6px;-webkit-text-stroke:0.200px;color:#000000;top:501.33px;left:664.48px;">€</span>
<span style="font-size:12.6px;line-height:12.6px;-webkit-text-stroke:0.200px;color:#000000;top:501.33px;left:650.00px;">-</span>
<span style="font-size:12.6px;line-height:12.6px;-webkit-text-stroke:0.200px;color:#000000;top:501.33px;left:740.48px;">€</span>
<span style="font-size:12.6px;line-height:12.6px;-webkit-text-stroke:0.200px;color:#000000;top:501.33px;left:726.00px;">-</span>
<span style="font-size:12.6px;line-height:12.6px;-webkit-text-stroke:0.200px;color:#000000;top:501.33px;left:818.48px;">€</span>
<span style="font-size:12.6px;line-height:12.6px;-webkit-text-stroke:0.200px;color:#000000;top:501.33px;left:804.00px;">-</span>
<span style="font-size:12.6px;line-height:12.6px;-webkit-text-stroke:0.200px;color:#000000;top:501.33px;left:904.48px;">€</span>
<span style="font-size:12.6px;line-height:12.6px;-webkit-text-stroke:0.200px;color:#000000;top:501.33px;left:890.00px;">-</span>
<span style="font-size:13.2px;line-height:13.2px;font-weight:bold;color:#000000;top:518.83px;letter-spacing:-0.144px;left:28.20px;">2. Quartal</span>
<span style="font-size:12.6px;line-height:12.6px;font-weight:bold;color:#000000;top:520.33px;letter-spacing:0.070px;left:186.27px;">17.760,00 €</span>
<span style="font-size:12.6px;line-height:12.6px;font-weight:bold;color:#000000;top:520.33px;left:351.48px;">€</span>
<span style="font-size:12.6px;line-height:12.6px;font-weight:bold;color:#000000;top:520.33px;left:337.00px;">-</span>
<span style="font-size:12.6px;line-height:12.6px;font-weight:bold;color:#000000;top:520.33px;letter-spacing:0.070px;left:383.34px;">3.374,40 €</span>
<span style="font-size:12.6px;line-height:12.6px;font-weight:bold;color:#000000;top:520.33px;letter-spacing:0.070px;left:477.05px;">28,50 €</span>
<span style="font-size:12.6px;line-height:12.6px;font-weight:bold;color:#000000;top:520.33px;left:588.48px;">€</span>
<span style="font-size:12.6px;line-height:12.6px;font-weight:bold;color:#000000;top:520.33px;left:574.00px;">-</span>
<span style="font-size:12.6px;line-height:12.6px;font-weight:bold;color:#000000;top:520.33px;left:664.48px;">€</span>
<span style="font-size:12.6px;line-height:12.6px;font-weight:bold;color:#000000;top:520.33px;left:650.00px;">-</span>
<span style="font-size:12.6px;line-height:12.6px;font-weight:bold;color:#000000;top:520.33px;left:740.48px;">€</span>
<span style="font-size:12.6px;line-height:12.6px;font-weight:bold;color:#000000;top:520.33px;left:726.00px;">-</span>
<span style="font-size:12.6px;line-height:12.6px;font-weight:bold;color:#000000;top:520.33px;letter-spacing:0.070px;left:783.05px;">28,50 €</span>
<span style="font-size:12.6px;line-height:12.6px;font-weight:bold;color:#000000;top:520.33px;letter-spacing:0.070px;left:851.34px;">3.345,90 €</span>
<span style="font-size:12.6px;line-height:12.6px;font-weight:bold;color:#000000;top:520.33px;letter-spacing:0.070px;left:1079.34px;">3.391,50 €</span>
<span style="font-size:12.6px;line-height:12.6px;-webkit-text-stroke:0.200px;color:#000000;top:542.33px;left:144.98px;">7</span>
<span style="font-size:12.6px;line-height:12.6px;-webkit-text-stroke:0.200px;color:#000000;top:542.33px;letter-spacing:0.070px;left:186.27px;">10.000,00 €</span>
<span style="font-size:12.6px;line-height:12.6px;-webkit-text-stroke:0.200px;color:#000000;top:542.33px;left:351.48px;">€</span>
<span style="font-size:12.6px;line-height:12.6px;-webkit-text-stroke:0.200px;color:#000000;top:542.33px;left:337.00px;">-</span>
<span style="font-size:12.6px;line-height:12.6px;-webkit-text-stroke:0.200px;color:#000000;top:542.33px;letter-spacing:0.070px;left:383.34px;">1.900,00 €</span>
<span style="font-size:12.6px;line-height:12.6px;-webkit-text-stroke:0.200px;color:#000000;top:542.33px;letter-spacing:0.070px;left:484.13px;">5,70 €</span>
<span style="font-size:12.6px;line-height:12.6px;-webkit-text-stroke:0.200px;color:#000000;top:542.33px;left:588.48px;">€</span>
<span style="font-size:12.6px;line-height:12.6px;-webkit-text-stroke:0.200px;color:#000000;top:542.33px;left:574.00px;">-</span>
<span style="font-size:12.6px;line-height:12.6px;-webkit-text-stroke:0.200px;color:#000000;top:542.33px;left:664.48px;">€</span>
<span style="font-size:12.6px;line-height:12.6px;-webkit-text-stroke:0.200px;color:#000000;top:542.33px;left:650.00px;">-</span>
<span style="font-size:12.6px;line-height:12.6px;-webkit-text-stroke:0.200px;color:#000000;top:542.33px;left:740.48px;">€</span>
<span style="font-size:12.6px;line-height:12.6px;-webkit-text-stroke:0.200px;color:#000000;top:542.33px;left:726.00px;">-</span>
<span style="font-size:12.6px;line-height:12.6px;-webkit-text-stroke:0.200px;color:#000000;top:542.33px;letter-spacing:0.070px;left:790.13px;">5,70 €</span>
<span style="font-size:12.6px;line-height:12.6px;-webkit-text-stroke:0.200px;color:#000000;top:542.33px;letter-spacing:0.070px;left:851.34px;">1.894,30 €</span>
<span style="font-size:12.6px;line-height:12.6px;-webkit-text-stroke:0.200px;color:#000000;top:562.33px;left:144.98px;">8</span>
<span style="font-size:12.6px;line-height:12.6px;-webkit-text-stroke:0.200px;color:#000000;top:562.33px;left:246.48px;">€</span>
<span style="font-size:12.6px;line-height:12.6px;-webkit-text-stroke:0.200px;color:#000000;top:562.33px;left:232.00px;">-</span>
<span style="font-size:12.6px;line-height:12.6px;-webkit-text-stroke:0.200px;color:#000000;top:562.33px;left:351.48px;">€</span>
<span style="font-size:12.6px;line-height:12.6px;-webkit-text-stroke:0.200px;color:#000000;top:562.33px;left:337.00px;">-</span>
<span style="font-size:12.6px;line-height:12.6px;-webkit-text-stroke:0.200px;color:#000000;top:562.33px;left:436.48px;">€</span>
<span style="font-size:12.6px;line-height:12.6px;-webkit-text-stroke:0.200px;color:#000000;top:562.33px;left:422.00px;">-</span>
<span style="font-size:12.6px;line-height:12.6px;-webkit-text-stroke:0.200px;color:#000000;top:562.33px;letter-spacing:0.070px;left:477.05px;">76,00 €</span>
<span style="font-size:12.6px;line-height:12.6px;-webkit-text-stroke:0.200px;color:#000000;top:562.33px;letter-spacing:0.070px;left:545.98px;">152,00 €</span>
<span style="font-size:12.6px;line-height:12.6px;-webkit-text-stroke:0.200px;color:#000000;top:562.33px;left:664.48px;">€</span>
<span style="font-size:12.6px;line-height:12.6px;-webkit-text-stroke:0.200px;color:#000000;top:562.33px;left:650.00px;">-</span>
<span style="font-size:12.6px;line-height:12.6px;-webkit-text-stroke:0.200px;color:#000000;top:562.33px;letter-spacing:0.070px;left:697.98px;">228,00 €</span>
<span style="font-size:12.6px;line-height:12.6px;-webkit-text-stroke:0.200px;color:#000000;top:562.33px;letter-spacing:0.070px;left:775.98px;">456,00 €</span>
<span style="font-size:12.6px;line-height:12.6px;-webkit-text-stroke:0.200px;color:#000000;top:562.33px;letter-spacing:0.070px;left:861.98px;">456,00 €</span>
<span style="font-size:12.6px;line-height:12.6px;-webkit-text-stroke:0.200px;color:#000000;top:562.33px;left:834.00px;">-</span>
<span style="font-size:12.6px;line-height:12.6px;-webkit-text-stroke:0.200px;color:#000000;top:582.33px;left:144.98px;">9</span>
<span style="font-size:12.6px;line-height:12.6px;-webkit-text-stroke:0.200px;color:#000000;top:582.33px;letter-spacing:0.070px;left:186.27px;">15.000,00 €</span>
<span style="font-size:12.6px;line-height:12.6px;-webkit-text-stroke:0.200px;color:#000000;top:582.33px;left:351.48px;">€</span>
<span style="font-size:12.6px;line-height:12.6px;-webkit-text-stroke:0.200px;color:#000000;top:582.33px;left:337.00px;">-</span>
<span style="font-size:12.6px;line-height:12.6px;-webkit-text-stroke:0.200px;color:#000000;top:582.33px;letter-spacing:0.070px;left:383.34px;">2.850,00 €</span>
<span style="font-size:12.6px;line-height:12.6px;-webkit-text-stroke:0.200px;color:#000000;top:582.33px;left:512.48px;">€</span>
<span style="font-size:12.6px;line-height:12.6px;-webkit-text-stroke:0.200px;color:#000000;top:582.33px;left:498.00px;">-</span>
<span style="font-size:12.6px;line-height:12.6px;-webkit-text-stroke:0.200px;color:#000000;top:582.33px;left:588.48px;">€</span>
<span style="font-size:12.6px;line-height:12.6px;-webkit-text-stroke:0.200px;color:#000000;top:582.33px;left:574.00px;">-</span>
<span style="font-size:12.6px;line-height:12.6px;-webkit-text-stroke:0.200px;color:#000000;top:582.33px;left:664.48px;">€</span>
<span style="font-size:12.6px;line-height:12.6px;-webkit-text-stroke:0.200px;color:#000000;top:582.33px;left:650.00px;">-</span>
<span style="font-size:12.6px;line-height:12.6px;-webkit-text-stroke:0.200px;color:#000000;top:582.33px;left:740.48px;">€</span>
<span style="font-size:12.6px;line-height:12.6px;-webkit-text-stroke:0.200px;color:#000000;top:582.33px;left:726.00px;">-</span>
<span style="font-size:12.6px;line-height:12.6px;-webkit-text-stroke:0.200px;color:#000000;top:582.33px;left:818.48px;">€</span>
<span style="font-size:12.6px;line-height:12.6px;-webkit-text-stroke:0.200px;color:#000000;top:582.33px;left:804.00px;">-</span>
<span style="font-size:12.6px;line-height:12.6px;-webkit-text-stroke:0.200px;color:#000000;top:582.33px;letter-spacing:0.070px;left:851.34px;">2.850,00 €</span>
<span style="font-size:13.2px;line-height:13.2px;font-weight:bold;color:#000000;top:599.83px;letter-spacing:-0.144px;left:28.20px;">3. Quartal</span>
<span style="font-size:12.6px;line-height:12.6px;font-weight:bold;color:#000000;top:601.33px;letter-spacing:0.070px;left:186.27px;">25.000,00 €</span>
<span style="font-size:12.6px;line-height:12.6px;font-weight:bold;color:#000000;top:601.33px;left:351.48px;">€</span>
<span style="font-size:12.6px;line-height:12.6px;font-weight:bold;color:#000000;top:601.33px;left:337.00px;">-</span>
<span style="font-size:12.6px;line-height:12.6px;font-weight:bold;color:#000000;top:601.33px;letter-spacing:0.070px;left:383.34px;">4.750,00 €</span>
<span style="font-size:12.6px;line-height:12.6px;font-weight:bold;color:#000000;top:601.33px;letter-spacing:0.070px;left:477.05px;">81,70 €</span>
<span style="font-size:12.6px;line-height:12.6px;font-weight:bold;color:#000000;top:601.33px;letter-spacing:0.070px;left:545.98px;">152,00 €</span>
<span style="font-size:12.6px;line-height:12.6px;font-weight:bold;color:#000000;top:601.33px;left:664.48px;">€</span>
<span style="font-size:12.6px;line-height:12.6px;font-weight:bold;color:#000000;top:601.33px;left:650.00px;">-</span>
<span style="font-size:12.6px;line-height:12.6px;font-weight:bold;color:#000000;top:601.33px;letter-spacing:0.070px;left:697.98px;">228,00 €</span>
<span style="font-size:12.6px;line-height:12.6px;font-weight:bold;color:#000000;top:601.33px;letter-spacing:0.070px;left:775.98px;">461,70 €</span>
<span style="font-size:12.6px;line-height:12.6px;font-weight:bold;color:#000000;top:601.33px;letter-spacing:0.070px;left:851.34px;">4.288,30 €</span>
<span style="font-size:12.6px;line-height:12.6px;font-weight:bold;color:#000000;top:601.33px;letter-spacing:0.070px;left:1079.34px;">4.288,30 €</span>
<span style="font-size:12.6px;line-height:12.6px;-webkit-text-stroke:0.200px;color:#000000;top:623.33px;left:137.98px;">10</span>
<span style="font-size:12.6px;line-height:12.6px;-webkit-text-stroke:0.200px;color:#000000;top:623.33px;left:246.48px;">€</span>
<span style="font-size:12.6px;line-height:12.6px;-webkit-text-stroke:0.200px;color:#000000;top:623.33px;left:232.00px;">-</span>
<span style="font-size:12.6px;line-height:12.6px;-webkit-text-stroke:0.200px;color:#000000;top:623.33px;left:351.48px;">€</span>
<span style="font-size:12.6px;line-height:12.6px;-webkit-text-stroke:0.200px;color:#000000;top:623.33px;left:337.00px;">-</span>
<span style="font-size:12.6px;line-height:12.6px;-webkit-text-stroke:0.200px;color:#000000;top:623.33px;left:436.48px;">€</span>
<span style="font-size:12.6px;line-height:12.6px;-webkit-text-stroke:0.200px;color:#000000;top:623.33px;left:422.00px;">-</span>
<span style="font-size:12.6px;line-height:12.6px;-webkit-text-stroke:0.200px;color:#000000;top:623.33px;letter-spacing:0.070px;left:477.05px;">76,00 €</span>
<span style="font-size:12.6px;line-height:12.6px;-webkit-text-stroke:0.200px;color:#000000;top:623.33px;left:588.48px;">€</span>
<span style="font-size:12.6px;line-height:12.6px;-webkit-text-stroke:0.200px;color:#000000;top:623.33px;left:574.00px;">-</span>
<span style="font-size:12.6px;line-height:12.6px;-webkit-text-stroke:0.200px;color:#000000;top:623.33px;letter-spacing:0.070px;left:636.13px;">9,50 €</span>
<span style="font-size:12.6px;line-height:12.6px;-webkit-text-stroke:0.200px;color:#000000;top:623.33px;left:740.48px;">€</span>
<span style="font-size:12.6px;line-height:12.6px;-webkit-text-stroke:0.200px;color:#000000;top:623.33px;left:726.00px;">-</span>
<span style="font-size:12.6px;line-height:12.6px;-webkit-text-stroke:0.200px;color:#000000;top:623.33px;letter-spacing:0.070px;left:783.05px;">85,50 €</span>
<span style="font-size:12.6px;line-height:12.6px;-webkit-text-stroke:0.200px;color:#000000;top:623.33px;letter-spacing:0.070px;left:869.05px;">85,50 €</span>
<span style="font-size:12.6px;line-height:12.6px;-webkit-text-stroke:0.200px;color:#000000;top:623.33px;left:834.00px;">-</span>
<span style="font-size:12.6px;line-height:12.6px;-webkit-text-stroke:0.200px;color:#000000;top:643.33px;left:138.92px;">11</span>
<span style="font-size:12.6px;line-height:12.6px;-webkit-text-stroke:0.200px;color:#000000;top:643.33px;letter-spacing:0.070px;left:203.98px;">100,00 €</span>
<span style="font-size:12.6px;line-height:12.6px;-webkit-text-stroke:0.200px;color:#000000;top:643.33px;left:351.48px;">€</span>
<span style="font-size:12.6px;line-height:12.6px;-webkit-text-stroke:0.200px;color:#000000;top:643.33px;left:337.00px;">-</span>
<span style="font-size:12.6px;line-height:12.6px;-webkit-text-stroke:0.200px;color:#000000;top:643.33px;letter-spacing:0.070px;left:401.05px;">19,00 €</span>
<span style="font-size:12.6px;line-height:12.6px;-webkit-text-stroke:0.200px;color:#000000;top:643.33px;letter-spacing:0.070px;left:477.05px;">95,00 €</span>
<span style="font-size:12.6px;line-height:12.6px;-webkit-text-stroke:0.200px;color:#000000;top:643.33px;letter-spacing:0.070px;left:535.34px;">4.789,92 €</span>
<span style="font-size:12.6px;line-height:12.6px;-webkit-text-stroke:0.200px;color:#000000;top:643.33px;left:664.48px;">€</span>
<span style="font-size:12.6px;line-height:12.6px;-webkit-text-stroke:0.200px;color:#000000;top:643.33px;left:650.00px;">-</span>
<span style="font-size:12.6px;line-height:12.6px;-webkit-text-stroke:0.200px;color:#000000;top:643.33px;left:740.48px;">€</span>
<span style="font-size:12.6px;line-height:12.6px;-webkit-text-stroke:0.200px;color:#000000;top:643.33px;left:726.00px;">-</span>
<span style="font-size:12.6px;line-height:12.6px;-webkit-text-stroke:0.200px;color:#000000;top:643.33px;letter-spacing:0.070px;left:765.34px;">4.884,92 €</span>
<span style="font-size:12.6px;line-height:12.6px;-webkit-text-stroke:0.200px;color:#000000;top:643.33px;letter-spacing:0.070px;left:851.34px;">4.865,92 €</span>
<span style="font-size:12.6px;line-height:12.6px;-webkit-text-stroke:0.200px;color:#000000;top:643.33px;left:834.00px;">-</span>
<span style="font-size:12.6px;line-height:12.6px;-webkit-text-stroke:0.200px;color:#000000;top:663.33px;left:137.98px;">12</span>
<span style="font-size:12.6px;line-height:12.6px;-webkit-text-stroke:0.200px;color:#000000;top:663.33px;left:246.48px;">€</span>
<span style="font-size:12.6px;line-height:12.6px;-webkit-text-stroke:0.200px;color:#000000;top:663.33px;left:232.00px;">-</span>
<span style="font-size:12.6px;line-height:12.6px;-webkit-text-stroke:0.200px;color:#000000;top:663.33px;left:351.48px;">€</span>
<span style="font-size:12.6px;line-height:12.6px;-webkit-text-stroke:0.200px;color:#000000;top:663.33px;left:337.00px;">-</span>
<span style="font-size:12.6px;line-height:12.6px;-webkit-text-stroke:0.200px;color:#000000;top:663.33px;left:436.48px;">€</span>
<span style="font-size:12.6px;line-height:12.6px;-webkit-text-stroke:0.200px;color:#000000;top:663.33px;left:422.00px;">-</span>
<span style="font-size:12.6px;line-height:12.6px;-webkit-text-stroke:0.200px;color:#000000;top:663.33px;letter-spacing:0.070px;left:469.98px;">237,50 €</span>
<span style="font-size:12.6px;line-height:12.6px;-webkit-text-stroke:0.200px;color:#000000;top:663.33px;left:588.48px;">€</span>
<span style="font-size:12.6px;line-height:12.6px;-webkit-text-stroke:0.200px;color:#000000;top:663.33px;left:574.00px;">-</span>
<span style="font-size:12.6px;line-height:12.6px;-webkit-text-stroke:0.200px;color:#000000;top:663.33px;left:664.48px;">€</span>
<span style="font-size:12.6px;line-height:12.6px;-webkit-text-stroke:0.200px;color:#000000;top:663.33px;left:650.00px;">-</span>
<span style="font-size:12.6px;line-height:12.6px;-webkit-text-stroke:0.200px;color:#000000;top:663.33px;left:740.48px;">€</span>
<span style="font-size:12.6px;line-height:12.6px;-webkit-text-stroke:0.200px;color:#000000;top:663.33px;left:726.00px;">-</span>
<span style="font-size:12.6px;line-height:12.6px;-webkit-text-stroke:0.200px;color:#000000;top:663.33px;letter-spacing:0.070px;left:775.98px;">237,50 €</span>
<span style="font-size:12.6px;line-height:12.6px;-webkit-text-stroke:0.200px;color:#000000;top:663.33px;letter-spacing:0.070px;left:861.98px;">237,50 €</span>
<span style="font-size:12.6px;line-height:12.6px;-webkit-text-stroke:0.200px;color:#000000;top:663.33px;left:834.00px;">-</span>
<span style="font-size:13.2px;line-height:13.2px;font-weight:bold;color:#000000;top:680.83px;letter-spacing:-0.144px;left:28.20px;">4. Quartal</span>
<span style="font-size:12.6px;line-height:12.6px;font-weight:bold;color:#000000;top:682.33px;letter-spacing:0.070px;left:203.98px;">100,00 €</span>
<span style="font-size:12.6px;line-height:12.6px;font-weight:bold;color:#000000;top:682.33px;left:351.48px;">€</span>
<span style="font-size:12.6px;line-height:12.6px;font-weight:bold;color:#000000;top:682.33px;left:337.00px;">-</span>
<span style="font-size:12.6px;line-height:12.6px;font-weight:bold;color:#000000;top:682.33px;letter-spacing:0.070px;left:401.05px;">19,00 €</span>
<span style="font-size:12.6px;line-height:12.6px;font-weight:bold;color:#000000;top:682.33px;letter-spacing:0.070px;left:469.98px;">408,50 €</span>
<span style="font-size:12.6px;line-height:12.6px;font-weight:bold;color:#000000;top:682.33px;letter-spacing:0.070px;left:535.34px;">4.789,92 €</span>
<span style="font-size:12.6px;line-height:12.6px;font-weight:bold;color:#000000;top:682.33px;letter-spacing:0.070px;left:636.13px;">9,50 €</span>
<span style="font-size:12.6px;line-height:12.6px;font-weight:bold;color:#000000;top:682.33px;left:740.48px;">€</span>
<span style="font-size:12.6px;line-height:12.6px;font-weight:bold;color:#000000;top:682.33px;left:726.00px;">-</span>
<span style="font-size:12.6px;line-height:12.6px;font-weight:bold;color:#000000;top:682.33px;letter-spacing:0.070px;left:765.34px;">5.207,92 €</span>
<span style="font-size:12.6px;line-height:12.6px;font-weight:bold;color:#000000;top:682.33px;letter-spacing:0.070px;left:851.34px;">5.188,92 €</span>
<span style="font-size:12.6px;line-height:12.6px;font-weight:bold;color:#000000;top:682.33px;left:834.00px;">-</span>
<span style="font-size:12.6px;line-height:12.6px;font-weight:bold;color:#000000;top:682.33px;letter-spacing:0.070px;left:1079.34px;">5.188,92 €</span>
<span style="font-size:12.6px;line-height:12.6px;-webkit-text-stroke:0.200px;color:#000000;top:682.33px;left:947.00px;">-</span>
<span style="font-size:13.2px;line-height:13.2px;font-weight:bold;color:#000000;top:701.83px;letter-spacing:-0.465px;left:28.20px;">Jahr</span>
<span style="font-size:12.6px;line-height:12.6px;font-weight:bold;color:#000000;top:703.33px;letter-spacing:0.070px;left:186.27px;">51.860,00 €</span>
<span style="font-size:12.6px;line-height:12.6px;font-weight:bold;color:#000000;top:703.33px;left:351.48px;">€</span>
<span style="font-size:12.6px;line-height:12.6px;font-weight:bold;color:#000000;top:703.33px;left:337.00px;">-</span>
<span style="font-size:12.6px;line-height:12.6px;font-weight:bold;color:#000000;top:703.33px;letter-spacing:0.070px;left:383.34px;">9.853,40 €</span>
<span style="font-size:12.6px;line-height:12.6px;font-weight:bold;color:#000000;top:703.33px;letter-spacing:0.070px;left:459.34px;">1.763,20 €</span>
<span style="font-size:12.6px;line-height:12.6px;font-weight:bold;color:#000000;top:703.33px;letter-spacing:0.070px;left:535.34px;">4.941,92 €</span>
<span style="font-size:12.6px;line-height:12.6px;font-weight:bold;color:#000000;top:703.33px;letter-spacing:0.070px;left:636.13px;">9,50 €</span>
<span style="font-size:12.6px;line-height:12.6px;font-weight:bold;color:#000000;top:703.33px;letter-spacing:0.070px;left:697.98px;">228,00 €</span>
<span style="font-size:12.6px;line-height:12.6px;font-weight:bold;color:#000000;top:703.33px;letter-spacing:0.070px;left:765.34px;">6.942,62 €</span>
<span style="font-size:12.6px;line-height:12.6px;font-weight:bold;color:#000000;top:703.33px;letter-spacing:0.070px;left:851.34px;">2.910,78 €</span>
<span style="font-size:12.6px;line-height:12.6px;font-weight:bold;color:#000000;top:703.33px;letter-spacing:0.070px;left:1079.34px;">2.956,38 €</span>
<span style="font-size:11.5px;line-height:11.5px;color:#555;top:804.77px;letter-spacing:-0.091px;left:7.70px;">Bereit</span>
<span style="font-size:13px;line-height:13px;font-weight:bold;color:#217346;top:778.00px;letter-spacing:-0.115px;left:80.70px;">...</span>
<span style="font-size:12.6px;line-height:12.6px;-webkit-text-stroke:0.200px;color:#262626;top:778.83px;letter-spacing:-0.287px;left:113.70px;">ESt.Zahl</span>
<span style="font-size:12.6px;line-height:12.6px;-webkit-text-stroke:0.200px;color:#262626;top:778.83px;letter-spacing:-0.131px;left:190.70px;">Sonst.Leist.Entn.</span>
<span style="font-size:12.6px;line-height:12.6px;-webkit-text-stroke:0.200px;color:#262626;top:778.83px;letter-spacing:0.337px;left:314.20px;">Kfz-Nutzung</span>
<span style="font-size:12.6px;line-height:12.6px;-webkit-text-stroke:0.200px;color:#262626;top:778.83px;letter-spacing:0.232px;left:417.20px;">Arbeitszimmer</span>
<span style="font-size:12.6px;line-height:12.6px;-webkit-text-stroke:0.200px;color:#ffffff;top:778.83px;letter-spacing:0.326px;left:529.20px;">pr.Ausg</span>
<span style="font-size:12.6px;line-height:12.6px;font-weight:bold;color:#217346;top:778.83px;letter-spacing:0.234px;left:600.20px;">USt.Voranm</span>
<span style="font-size:12.6px;line-height:12.6px;-webkit-text-stroke:0.200px;color:#262626;top:778.83px;letter-spacing:-0.139px;left:699.70px;">USt.Erklär</span>
<span style="font-size:12.6px;line-height:12.6px;-webkit-text-stroke:0.200px;color:#262626;top:778.83px;letter-spacing:-0.411px;left:783.20px;">BWA</span>
<span style="font-size:12.6px;line-height:12.6px;-webkit-text-stroke:0.200px;color:#262626;top:778.83px;letter-spacing:-0.698px;left:835.70px;">EÜR</span>
<span style="font-size:11.5px;line-height:11.5px;-webkit-text-stroke:0.200px;color:#444;top:804.77px;letter-spacing:-0.422px;left:1235.70px;">100 %</span>
<div style="left:0;top:0;width:1285px;height:1px;background:#e3dfe1;"></div><div style="left:0;top:0;width:1px;height:820px;background:#e3dfe1;"></div><div style="left:1284px;top:1px;width:1px;height:819px;background:#cfcfcf;"></div><div style="left:0;top:819px;width:1285px;height:1px;background:#c8c8c8;"></div>
</div></body></html>
